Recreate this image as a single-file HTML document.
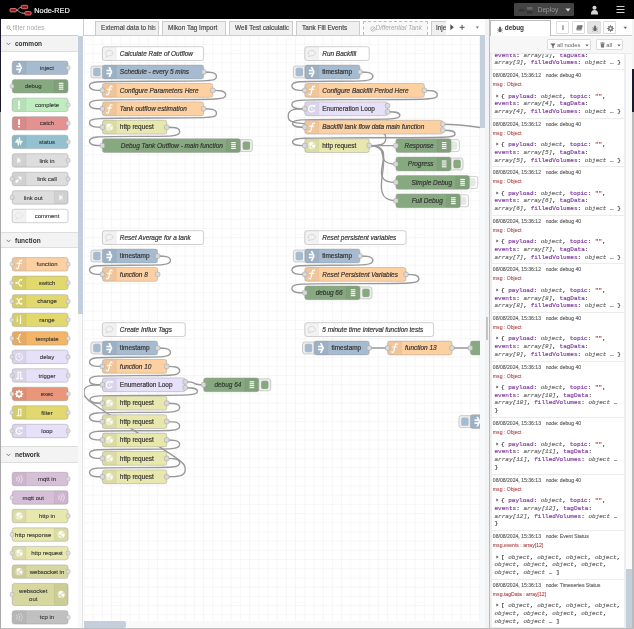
<!DOCTYPE html>
<html><head><meta charset="utf-8"><title>Node-RED</title>
<style>
html,body{margin:0;padding:0;background:#fff;}
body{width:634px;height:629px;overflow:hidden;position:relative;font-family:"Liberation Sans", sans-serif;color:#333;}
#wrap{position:absolute;left:0;top:0;width:634px;height:629px;overflow:hidden;will-change:transform;}
div,span{box-sizing:border-box;}
.abs{position:absolute;}
#hdr{position:absolute;left:0;top:0;width:634px;height:18.7px;background:#000;}
#hdr .title{position:absolute;left:34.3px;top:6.2px;font-size:7.35px;line-height:9px;color:#eee;white-space:nowrap;-webkit-text-stroke:0.2px #eee;}
#deploy{position:absolute;left:514.2px;top:3.3px;width:59.5px;height:12.5px;background:#444;border-radius:1px;}
#deploy .lbl{position:absolute;left:23.5px;top:2.6px;font-size:6.6px;line-height:8px;color:#999;}
#deploy .div{position:absolute;left:46.5px;top:0;width:0.6px;height:12.5px;background:#222;}
#palette{position:absolute;left:1.4px;top:18.7px;width:77px;height:611px;background:#fff;overflow:hidden;}
#psearch{position:absolute;left:0;top:0;width:82px;height:17.3px;background:#fff;border-bottom:0.6px solid #ccc;}
#psearch .t{position:absolute;left:11.4px;top:5.5px;font-size:6.5px;line-height:8px;color:#aaa;}
.cat{position:absolute;left:0;width:77px;height:16.8px;background:#f3f3f3;border-top:0.5px solid #ddd;border-bottom:0.5px solid #ddd;}
.cat .t{position:absolute;left:13.6px;top:4.3px;font-size:6.5px;line-height:8px;font-weight:bold;color:#333;}
#pscroll{position:absolute;left:78.3px;top:36px;width:5.2px;height:594px;background:#f8f9fa;border-right:0.5px solid #e4e4e4;}
#pscroll .th{position:absolute;left:0;top:0;width:5.2px;height:278.3px;background:#c3cfdc;}
#tabs{position:absolute;left:83.5px;top:18.7px;width:402px;height:17.3px;background:#fff;border-bottom:1px solid #ccc;}
.tab{position:absolute;top:2.2px;height:14.3px;background:#f0f0f0;border:0.6px solid #ccc;border-bottom:none;font-size:6.45px;line-height:8px;color:#444;-webkit-text-stroke:0.15px #444;white-space:nowrap;overflow:hidden;padding:2.5px 0 0 5px;}
.tab .fd{position:absolute;right:0;top:0;width:5px;height:14px;background:linear-gradient(to right,rgba(240,240,240,0),#f0f0f0);}
.tab.dis{border-style:dashed dashed none dashed;border-color:#bbb;color:#aaa;-webkit-text-stroke:0;font-style:italic;background:#f8f8f8;}
#canvas{position:absolute;left:83.5px;top:36.0px;width:396px;height:586px;background:#fff;overflow:hidden;}
#vscroll{position:absolute;left:479.6px;top:36px;width:5.2px;height:586px;background:#f8f9fa;}
#vscroll .th{position:absolute;left:0;top:0;width:5.2px;height:92.3px;background:#c3cfdc;}
#hscroll{position:absolute;left:83.5px;top:621.3px;width:401.5px;height:8px;background:#f8f9fa;}
#hscroll .th{position:absolute;left:0;top:0;width:42px;height:6.4px;background:#c3cfdc;border-radius:0 2px 2px 0;}
#sep{position:absolute;left:484.8px;top:18.7px;width:4px;height:611px;background:#f3f3f3;}
#side{position:absolute;left:488.5px;top:18.7px;width:143.6px;height:611px;background:#fff;border-left:0.6px solid #bbb;overflow:hidden;}
#stabs{position:absolute;left:0;top:0;width:144px;height:17.3px;background:#fff;border-bottom:1px solid #ccc;}
#stab{position:absolute;left:0.7px;top:1.8px;width:60.5px;height:15.2px;background:#fff;border:0.6px solid #bbb;border-bottom:none;}
#stab .t{position:absolute;left:13.6px;top:2.3px;font-size:6.4px;line-height:8px;font-weight:bold;color:#333;}
.sbtn{position:absolute;top:2.3px;width:13.3px;height:12.7px;background:#fff;border:0.6px solid #ddd;border-radius:1px;}
#sfilter{position:absolute;left:0;top:17.3px;width:144px;height:18.3px;background:#f7f7f7;border-bottom:1px solid #eaeaea;}
.fbtn{position:absolute;top:3.4px;height:11px;background:#fff;border:0.6px solid #ddd;border-radius:1px;font-size:5.9px;line-height:7px;color:#666;white-space:nowrap;}
#msgs{position:absolute;left:0;top:35.6px;width:144px;height:578px;background:#fff;overflow:hidden;border-left:2.7px solid #eee;}
#msgs .rb{position:absolute;left:132.3px;top:0;width:2.7px;height:578px;background:#eee;}
#msgs .sb{position:absolute;left:134.9px;top:0;width:5.7px;height:578px;background:#fafafa;}
#msgs .sb .th{position:absolute;left:0;top:515.2px;width:6px;height:64px;background:#c3cfdc;}
.meta{position:absolute;left:1.35px;font-size:5.1px;line-height:7px;color:#666;white-space:nowrap;-webkit-text-stroke:0.15px;}
.meta .nn{position:absolute;left:52.8px;top:0;}
.topic{position:absolute;left:1.35px;font-size:5.1px;line-height:7px;color:#b04a4a;white-space:nowrap;-webkit-text-stroke:0.1px;}
.pl{position:absolute;left:3.0px;font-family:"Liberation Mono", monospace;font-size:6.03px;line-height:8px;color:#333;white-space:nowrap;-webkit-text-stroke:0.15px;}
.pl .k{color:#7d35a0;}
.pl .t{color:#666;font-style:italic;}
.pl .s{color:#b72828;}
.pl .car{position:absolute;left:1.300px;top:1.200px;}
.sep{position:absolute;left:0;width:133px;height:0.6px;background:#ececec;}
svg text{font-family:"Liberation Sans", sans-serif;stroke:#333;stroke-width:0.5px;stroke-opacity:0.75;}
</style></head><body><div id="wrap">
<!-- header -->
<div id="hdr">
<svg class="abs" style="left:9px;top:4px" width="24" height="12" viewBox="0 0 24 12">
<path d="M7 6.200C10 6.200 9.500 3 13 3M7 6.200C10 6.200 10 9.300 16 9.300" fill="none" stroke="#aaa" stroke-width="1"/>
<rect x="1" y="4.500" width="6.400" height="3.400" rx="1" fill="#a21616" stroke="#e39090" stroke-width="0.800"/>
<rect x="12.300" y="1.300" width="6.400" height="3.400" rx="1" fill="#a21616" stroke="#e39090" stroke-width="0.800"/>
<rect x="15.800" y="7.600" width="6.400" height="3.400" rx="1" fill="#a21616" stroke="#e39090" stroke-width="0.800"/>
</svg>
<div class="title">Node-RED</div>
<div id="deploy">
<svg class="abs" style="left:4px;top:2.500px" width="16" height="8" viewBox="0 0 16 8"><rect x="1" y="3" width="5" height="2.600" fill="#333"/><rect x="9" y="1" width="5.500" height="2.600" fill="#666"/><rect x="9" y="5" width="5.500" height="2.600" fill="#333"/><path d="M6 4.300h3" stroke="#333" stroke-width="0.800"/></svg>
<div class="lbl">Deploy</div>
<svg class="abs" style="left:51px;top:4.800px" width="6" height="4" viewBox="0 0 6 4"><path d="M0.500 0.500h5l-2.500 3z" fill="#ddd"/></svg>
</div>
<svg class="abs" style="left:589.500px;top:4.500px" width="9" height="10" viewBox="0 0 10 11"><circle cx="5" cy="3" r="2.300" fill="#d4d4d4"/><path d="M1 10.500c0-3.500 1.500-5 4-5s4 1.500 4 5z" fill="#d4d4d4"/></svg>
<svg class="abs" style="left:615.500px;top:5px" width="9" height="9" viewBox="0 0 9 9"><path d="M0.500 1.500h8M0.500 4.500h8M0.500 7.500h8" stroke="#d0d0d0" stroke-width="1.200"/></svg>
</div>
<div class="abs" style="left:0;top:18.700px;width:1.200px;height:93.700px;background:#1a1a2c"></div>
<div class="abs" style="left:0;top:112.400px;width:1.200px;height:518px;background:#aaa"></div>
<div class="abs" style="left:632.200px;top:18.700px;width:1.800px;height:50px;background:#f4f4f4"></div><div class="abs" style="left:632.200px;top:68.500px;width:1.800px;height:43.900px;background:#1a1a2c"></div>
<div class="abs" style="left:632.200px;top:112.400px;width:1.800px;height:518px;background:#bbb"></div>

<!-- palette -->
<div id="palette">
<div id="psearch"><svg class="abs" style="left:4.700px;top:6.300px" width="6" height="6" viewBox="0 0 6 6"><circle cx="2.400" cy="2.400" r="1.500" fill="none" stroke="#999" stroke-width="0.800"/><path d="M3.600 3.600l1.900 1.900" stroke="#999" stroke-width="0.900"/></svg><div class="t">filter nodes</div></div>
<div class="cat" style="top:17.300px;border-top:none;height:16.300px"><svg class="abs" style="left:4.800px;top:6px" width="5" height="4" viewBox="0 0 5 4"><path d="M0.600 0.800l1.900 2 1.900-2" fill="none" stroke="#666" stroke-width="0.800"/></svg><div class="t">common</div></div>
<div class="cat" style="top:213px"><svg class="abs" style="left:4.800px;top:6px" width="5" height="4" viewBox="0 0 5 4"><path d="M0.600 0.800l1.900 2 1.900-2" fill="none" stroke="#666" stroke-width="0.800"/></svg><div class="t">function</div></div>
<div class="cat" style="top:427.500px"><svg class="abs" style="left:4.800px;top:6px" width="5" height="4" viewBox="0 0 5 4"><path d="M0.600 0.800l1.900 2 1.900-2" fill="none" stroke="#666" stroke-width="0.800"/></svg><div class="t">network</div></div>
</div>
<svg class="abs" style="left:0;top:0" width="84" height="629" viewBox="0 0 84 629">
<defs><clipPath id="pc"><rect x="1.400" y="36" width="77" height="593"/></clipPath></defs>
<g clip-path="url(#pc)">
<g transform="translate(12.2,61.1) scale(0.46)"><rect rx="5" ry="5" width="121.4" height="29.2" fill="#a6bbcf" stroke="#999"/><g transform="translate(0,0)"><path d="M30 0.500h-25a4.500 4.500 0 0 0-4.500 4.500v19.2a4.500 4.500 0 0 0 4.500 4.500h25z" fill="#000" fill-opacity="0.05"/><path d="M30 1v27.2" stroke="#000" stroke-opacity="0.1"/><g transform="translate(0,-0.4)"><path d="M12.800 4.300h3.800l5.200 10.700-5.200 10.700h-3.800l5.200-10.700z" fill="#fff"/><rect x="8.800" y="10" width="9" height="3.500" fill="#fff"/><rect x="8.800" y="16.500" width="9" height="3.500" fill="#fff"/></g></g><text x="75.7" y="19.2" text-anchor="middle" font-size="13" fill="#333" style="stroke-width:0.3px">inject</text><rect x="117.4" y="10.1" rx="3" ry="3" width="8.500" height="9" fill="#dcdcdc" stroke="#999" stroke-opacity=".8"/></g>
<g transform="translate(12.2,79.62) scale(0.46)"><rect rx="5" ry="5" width="121.4" height="29.2" fill="#87a980" stroke="#999"/><g transform="translate(91.4,0)"><path d="M0 0.500h25a4.500 4.500 0 0 1 4.500 4.500v19.2a4.500 4.500 0 0 1-4.500 4.500h-25z" fill="#000" fill-opacity="0.05"/><path d="M0 1v27.2" stroke="#000" stroke-opacity="0.1"/><g transform="translate(0,-0.4)"><rect x="10" y="7.2" width="10" height="2.6" fill="#fff" opacity="0.9"/><rect x="10" y="11.4" width="10" height="2.6" fill="#fff" opacity="0.9"/><rect x="10" y="15.6" width="10" height="2.6" fill="#fff" opacity="0.9"/><rect x="10" y="19.8" width="10" height="2.6" fill="#fff" opacity="0.9"/></g></g><text x="45.7" y="19.2" text-anchor="middle" font-size="13" fill="#333" style="stroke-width:0.3px">debug</text><rect x="-4.5" y="10.1" rx="3" ry="3" width="8.500" height="9" fill="#dcdcdc" stroke="#999" stroke-opacity=".8"/></g>
<g transform="translate(12.2,98.14) scale(0.46)"><rect rx="5" ry="5" width="121.4" height="29.2" fill="#c0edc0" stroke="#999"/><g transform="translate(0,0)"><path d="M30 0.500h-25a4.500 4.500 0 0 0-4.500 4.500v19.2a4.500 4.500 0 0 0 4.500 4.500h25z" fill="#000" fill-opacity="0.05"/><path d="M30 1v27.2" stroke="#000" stroke-opacity="0.1"/><g transform="translate(0,-0.4)"><rect x="13" y="6" width="4" height="12.500" fill="#fff"/><rect x="13" y="20.500" width="4" height="3.500" fill="#fff"/></g></g><text x="75.7" y="19.2" text-anchor="middle" font-size="13" fill="#333" style="stroke-width:0.3px">complete</text><rect x="117.4" y="10.1" rx="3" ry="3" width="8.500" height="9" fill="#dcdcdc" stroke="#999" stroke-opacity=".8"/></g>
<g transform="translate(12.2,116.66) scale(0.46)"><rect rx="5" ry="5" width="121.4" height="29.2" fill="#e49191" stroke="#999"/><g transform="translate(0,0)"><path d="M30 0.500h-25a4.500 4.500 0 0 0-4.500 4.500v19.2a4.500 4.500 0 0 0 4.500 4.500h25z" fill="#000" fill-opacity="0.05"/><path d="M30 1v27.2" stroke="#000" stroke-opacity="0.1"/><g transform="translate(0,-0.4)"><rect x="13" y="6" width="4" height="12.500" fill="#fff"/><rect x="13" y="20.500" width="4" height="3.500" fill="#fff"/></g></g><text x="75.7" y="19.2" text-anchor="middle" font-size="13" fill="#333" style="stroke-width:0.3px">catch</text><rect x="117.4" y="10.1" rx="3" ry="3" width="8.500" height="9" fill="#dcdcdc" stroke="#999" stroke-opacity=".8"/></g>
<g transform="translate(12.2,135.18) scale(0.46)"><rect rx="5" ry="5" width="121.4" height="29.2" fill="#94c1d0" stroke="#999"/><g transform="translate(0,0)"><path d="M30 0.500h-25a4.500 4.500 0 0 0-4.500 4.500v19.2a4.500 4.500 0 0 0 4.500 4.500h25z" fill="#000" fill-opacity="0.05"/><path d="M30 1v27.2" stroke="#000" stroke-opacity="0.1"/><g transform="translate(0,-0.4)"><path d="M6.500 15.500h2.500l2-6 2.300 13 2.400-17 2.400 15 2-7h3" fill="none" stroke="#fff" stroke-width="2.300" stroke-linejoin="round"/></g></g><text x="75.7" y="19.2" text-anchor="middle" font-size="13" fill="#333" style="stroke-width:0.3px">status</text><rect x="117.4" y="10.1" rx="3" ry="3" width="8.500" height="9" fill="#dcdcdc" stroke="#999" stroke-opacity=".8"/></g>
<g transform="translate(12.2,153.7) scale(0.46)"><rect rx="5" ry="5" width="121.4" height="29.2" fill="#ddd" stroke="#999"/><g transform="translate(0,0)"><path d="M30 0.500h-25a4.500 4.500 0 0 0-4.500 4.500v19.2a4.500 4.500 0 0 0 4.500 4.500h25z" fill="#000" fill-opacity="0.05"/><path d="M30 1v27.2" stroke="#000" stroke-opacity="0.1"/><g transform="translate(0,-0.4)"><path d="M11 8.500l7.500 6.500-7.500 6.500z" fill="#fff" opacity=".85"/><path d="M17 8v14" stroke="#fff" stroke-width="1.600" opacity=".7"/></g></g><text x="75.7" y="19.2" text-anchor="middle" font-size="13" fill="#333" style="stroke-width:0.3px">link in</text><rect x="117.4" y="10.1" rx="3" ry="3" width="8.500" height="9" fill="#dcdcdc" stroke="#999" stroke-opacity=".8"/></g>
<g transform="translate(12.2,172.22) scale(0.46)"><rect rx="5" ry="5" width="121.4" height="29.2" fill="#ddd" stroke="#999"/><g transform="translate(0,0)"><path d="M30 0.500h-25a4.500 4.500 0 0 0-4.500 4.500v19.2a4.500 4.500 0 0 0 4.500 4.500h25z" fill="#000" fill-opacity="0.05"/><path d="M30 1v27.2" stroke="#000" stroke-opacity="0.1"/><g transform="translate(0,-0.4)"><path d="M9 21l5-5" stroke="#fff" stroke-width="3" opacity=".9"/><path d="M12 9.500l8.500 1-1 8.500z" fill="#fff" opacity=".9"/><circle cx="10" cy="20.500" r="3" fill="#fff" opacity=".9"/></g></g><text x="75.7" y="19.2" text-anchor="middle" font-size="13" fill="#333" style="stroke-width:0.3px">link call</text><rect x="-4.5" y="10.1" rx="3" ry="3" width="8.500" height="9" fill="#dcdcdc" stroke="#999" stroke-opacity=".8"/><rect x="117.4" y="10.1" rx="3" ry="3" width="8.500" height="9" fill="#dcdcdc" stroke="#999" stroke-opacity=".8"/></g>
<g transform="translate(12.2,190.74) scale(0.46)"><rect rx="5" ry="5" width="121.4" height="29.2" fill="#ddd" stroke="#999"/><g transform="translate(91.4,0)"><path d="M0 0.500h25a4.500 4.500 0 0 1 4.500 4.500v19.2a4.500 4.500 0 0 1-4.500 4.500h-25z" fill="#000" fill-opacity="0.05"/><path d="M0 1v27.2" stroke="#000" stroke-opacity="0.1"/><g transform="translate(0,-0.4)"><path d="M11 8.500l7.500 6.500-7.500 6.500z" fill="#fff" opacity=".85"/><path d="M17 8v14" stroke="#fff" stroke-width="1.600" opacity=".7"/></g></g><text x="45.7" y="19.2" text-anchor="middle" font-size="13" fill="#333" style="stroke-width:0.3px">link out</text><rect x="-4.5" y="10.1" rx="3" ry="3" width="8.500" height="9" fill="#dcdcdc" stroke="#999" stroke-opacity=".8"/></g>
<g transform="translate(12.2,209.26) scale(0.46)"><rect rx="5" ry="5" width="121.4" height="29.2" fill="#ffffff" stroke="#999"/><g transform="translate(0,0)"><path d="M30 0.500h-25a4.500 4.500 0 0 0-4.500 4.500v19.2a4.500 4.500 0 0 0 4.500 4.500h25z" fill="#000" fill-opacity="0.05"/><path d="M30 1v27.2" stroke="#000" stroke-opacity="0.1"/><g transform="translate(0,-0.4)"><path d="M15 8c-4.4 0-8 2.7-8 6 0 1.9 1.1 3.500 2.900 4.600-.2 1.300-.9 2.500-1.900 3.400 2-.2 3.700-1 5-2.200.6.1 1.300.2 2 .2 4.400 0 8-2.700 8-6s-3.600-6-8-6z" fill="none" stroke="#ddd" stroke-width="1.6"/></g></g><text x="75.7" y="19.2" text-anchor="middle" font-size="13" fill="#333" style="stroke-width:0.3px">comment</text></g>
<g transform="translate(12.2,257.6) scale(0.46)"><rect rx="5" ry="5" width="121.4" height="29.2" fill="#fdd0a2" stroke="#999"/><g transform="translate(0,0)"><path d="M30 0.500h-25a4.500 4.500 0 0 0-4.500 4.500v19.2a4.500 4.500 0 0 0 4.500 4.500h25z" fill="#000" fill-opacity="0.05"/><path d="M30 1v27.2" stroke="#000" stroke-opacity="0.1"/><g transform="translate(0,-0.4)"><path d="M21 7.300c-.7-2.100-3.900-2.100-4.500 1.100l-2.900 13.600c-.6 3.100-3.300 3.300-4.500 1.500M10.800 12.800h8.400" fill="none" stroke="#fff" stroke-width="2.600" stroke-linecap="round"/></g></g><text x="75.7" y="19.2" text-anchor="middle" font-size="13" fill="#333" style="stroke-width:0.3px">function</text><rect x="-4.5" y="10.1" rx="3" ry="3" width="8.500" height="9" fill="#dcdcdc" stroke="#999" stroke-opacity=".8"/><rect x="117.4" y="10.1" rx="3" ry="3" width="8.500" height="9" fill="#dcdcdc" stroke="#999" stroke-opacity=".8"/></g>
<g transform="translate(12.2,276.12) scale(0.46)"><rect rx="5" ry="5" width="121.4" height="29.2" fill="#e2d96e" stroke="#999"/><g transform="translate(0,0)"><path d="M30 0.500h-25a4.500 4.500 0 0 0-4.500 4.500v19.2a4.500 4.500 0 0 0 4.500 4.500h25z" fill="#000" fill-opacity="0.05"/><path d="M30 1v27.2" stroke="#000" stroke-opacity="0.1"/><g transform="translate(0,-0.4)"><path d="M8.500 15h5M19.500 8.500h-2.500l-4 6.500 4 6.500h2.500" fill="none" stroke="#fff" stroke-width="2.300" stroke-linejoin="round"/><circle cx="9" cy="15" r="2.300" fill="#fff"/><circle cx="20" cy="8.500" r="1.800" fill="#fff"/><circle cx="20" cy="21.500" r="1.800" fill="#fff"/></g></g><text x="75.7" y="19.2" text-anchor="middle" font-size="13" fill="#333" style="stroke-width:0.3px">switch</text><rect x="-4.5" y="10.1" rx="3" ry="3" width="8.500" height="9" fill="#dcdcdc" stroke="#999" stroke-opacity=".8"/><rect x="117.4" y="10.1" rx="3" ry="3" width="8.500" height="9" fill="#dcdcdc" stroke="#999" stroke-opacity=".8"/></g>
<g transform="translate(12.2,294.64) scale(0.46)"><rect rx="5" ry="5" width="121.4" height="29.2" fill="#e2d96e" stroke="#999"/><g transform="translate(0,0)"><path d="M30 0.500h-25a4.500 4.500 0 0 0-4.500 4.500v19.2a4.500 4.500 0 0 0 4.500 4.500h25z" fill="#000" fill-opacity="0.05"/><path d="M30 1v27.2" stroke="#000" stroke-opacity="0.1"/><g transform="translate(0,-0.4)"><path d="M9 9.500h2.500l6 11h2.500M9 20.500h2.500l6-11h2.500" fill="none" stroke="#fff" stroke-width="2.300"/><path d="M19 6.500l3.500 3-3.500 3zM19 17.500l3.500 3-3.500 3z" fill="#fff"/></g></g><text x="75.7" y="19.2" text-anchor="middle" font-size="13" fill="#333" style="stroke-width:0.3px">change</text><rect x="-4.5" y="10.1" rx="3" ry="3" width="8.500" height="9" fill="#dcdcdc" stroke="#999" stroke-opacity=".8"/><rect x="117.4" y="10.1" rx="3" ry="3" width="8.500" height="9" fill="#dcdcdc" stroke="#999" stroke-opacity=".8"/></g>
<g transform="translate(12.2,313.16) scale(0.46)"><rect rx="5" ry="5" width="121.4" height="29.2" fill="#e2d96e" stroke="#999"/><g transform="translate(0,0)"><path d="M30 0.500h-25a4.500 4.500 0 0 0-4.500 4.500v19.2a4.500 4.500 0 0 0 4.500 4.500h25z" fill="#000" fill-opacity="0.05"/><path d="M30 1v27.2" stroke="#000" stroke-opacity="0.1"/><g transform="translate(0,-0.4)"><path d="M11 12v8" stroke="#fff" stroke-width="2.200"/><circle cx="11" cy="9" r="1.300" fill="#fff"/><path d="M18 10v14" stroke="#fff" stroke-width="2.600"/><circle cx="18" cy="6.500" r="1.600" fill="#fff"/></g></g><text x="75.7" y="19.2" text-anchor="middle" font-size="13" fill="#333" style="stroke-width:0.3px">range</text><rect x="-4.5" y="10.1" rx="3" ry="3" width="8.500" height="9" fill="#dcdcdc" stroke="#999" stroke-opacity=".8"/><rect x="117.4" y="10.1" rx="3" ry="3" width="8.500" height="9" fill="#dcdcdc" stroke="#999" stroke-opacity=".8"/></g>
<g transform="translate(12.2,331.68) scale(0.46)"><rect rx="5" ry="5" width="121.4" height="29.2" fill="#f3b567" stroke="#999"/><g transform="translate(0,0)"><path d="M30 0.500h-25a4.500 4.500 0 0 0-4.500 4.500v19.2a4.500 4.500 0 0 0 4.500 4.500h25z" fill="#000" fill-opacity="0.05"/><path d="M30 1v27.2" stroke="#000" stroke-opacity="0.1"/><g transform="translate(0,-0.4)"><path d="M19 6c-3.500 0-4 1.500-4 4.500 0 2.500-.5 3.700-3 4.500 2.500.8 3 2 3 4.500 0 3 .5 4.500 4 4.500" fill="none" stroke="#fff" stroke-width="2.200"/></g></g><text x="75.7" y="19.2" text-anchor="middle" font-size="13" fill="#333" style="stroke-width:0.3px">template</text><rect x="-4.5" y="10.1" rx="3" ry="3" width="8.500" height="9" fill="#dcdcdc" stroke="#999" stroke-opacity=".8"/><rect x="117.4" y="10.1" rx="3" ry="3" width="8.500" height="9" fill="#dcdcdc" stroke="#999" stroke-opacity=".8"/></g>
<g transform="translate(12.2,350.2) scale(0.46)"><rect rx="5" ry="5" width="121.4" height="29.2" fill="#e6e0f8" stroke="#999"/><g transform="translate(0,0)"><path d="M30 0.500h-25a4.500 4.500 0 0 0-4.500 4.500v19.2a4.500 4.500 0 0 0 4.500 4.500h25z" fill="#000" fill-opacity="0.05"/><path d="M30 1v27.2" stroke="#000" stroke-opacity="0.1"/><g transform="translate(0,-0.4)"><circle cx="15" cy="15" r="7.500" fill="none" stroke="#fff" stroke-width="1.800" opacity=".9"/><path d="M15 10v5l3.500 2.500" fill="none" stroke="#fff" stroke-width="1.800" opacity=".9"/></g></g><text x="75.7" y="19.2" text-anchor="middle" font-size="13" fill="#333" style="stroke-width:0.3px">delay</text><rect x="-4.5" y="10.1" rx="3" ry="3" width="8.500" height="9" fill="#dcdcdc" stroke="#999" stroke-opacity=".8"/><rect x="117.4" y="10.1" rx="3" ry="3" width="8.500" height="9" fill="#dcdcdc" stroke="#999" stroke-opacity=".8"/></g>
<g transform="translate(12.2,368.72) scale(0.46)"><rect rx="5" ry="5" width="121.4" height="29.2" fill="#e6e0f8" stroke="#999"/><g transform="translate(0,0)"><path d="M30 0.500h-25a4.500 4.500 0 0 0-4.500 4.500v19.2a4.500 4.500 0 0 0 4.500 4.500h25z" fill="#000" fill-opacity="0.05"/><path d="M30 1v27.2" stroke="#000" stroke-opacity="0.1"/><g transform="translate(0,-0.4)"><path d="M8.500 22h4.500v-14h5.500v14h4.500" fill="none" stroke="#fff" stroke-width="2.400"/></g></g><text x="75.7" y="19.2" text-anchor="middle" font-size="13" fill="#333" style="stroke-width:0.3px">trigger</text><rect x="-4.5" y="10.1" rx="3" ry="3" width="8.500" height="9" fill="#dcdcdc" stroke="#999" stroke-opacity=".8"/><rect x="117.4" y="10.1" rx="3" ry="3" width="8.500" height="9" fill="#dcdcdc" stroke="#999" stroke-opacity=".8"/></g>
<g transform="translate(12.2,387.24) scale(0.46)"><rect rx="5" ry="5" width="121.4" height="29.2" fill="#e9967a" stroke="#999"/><g transform="translate(0,0)"><path d="M30 0.500h-25a4.500 4.500 0 0 0-4.500 4.500v19.2a4.500 4.500 0 0 0 4.500 4.500h25z" fill="#000" fill-opacity="0.05"/><path d="M30 1v27.2" stroke="#000" stroke-opacity="0.1"/><g transform="translate(0,-0.4)"><circle cx="15" cy="15" r="5.200" fill="none" stroke="#fff" stroke-width="3.400"/><rect x="13.500" y="6" width="3" height="3.500" fill="#fff" transform="rotate(0 15 15)"/><rect x="13.500" y="6" width="3" height="3.500" fill="#fff" transform="rotate(45 15 15)"/><rect x="13.500" y="6" width="3" height="3.500" fill="#fff" transform="rotate(90 15 15)"/><rect x="13.500" y="6" width="3" height="3.500" fill="#fff" transform="rotate(135 15 15)"/><rect x="13.500" y="6" width="3" height="3.500" fill="#fff" transform="rotate(180 15 15)"/><rect x="13.500" y="6" width="3" height="3.500" fill="#fff" transform="rotate(225 15 15)"/><rect x="13.500" y="6" width="3" height="3.500" fill="#fff" transform="rotate(270 15 15)"/><rect x="13.500" y="6" width="3" height="3.500" fill="#fff" transform="rotate(315 15 15)"/></g></g><text x="75.7" y="19.2" text-anchor="middle" font-size="13" fill="#333" style="stroke-width:0.3px">exec</text><rect x="-4.5" y="10.1" rx="3" ry="3" width="8.500" height="9" fill="#dcdcdc" stroke="#999" stroke-opacity=".8"/><rect x="117.4" y="10.1" rx="3" ry="3" width="8.500" height="9" fill="#dcdcdc" stroke="#999" stroke-opacity=".8"/></g>
<g transform="translate(12.2,405.76) scale(0.46)"><rect rx="5" ry="5" width="121.4" height="29.2" fill="#e2d96e" stroke="#999"/><g transform="translate(0,0)"><path d="M30 0.500h-25a4.500 4.500 0 0 0-4.500 4.500v19.2a4.500 4.500 0 0 0 4.500 4.500h25z" fill="#000" fill-opacity="0.05"/><path d="M30 1v27.2" stroke="#000" stroke-opacity="0.1"/><g transform="translate(0,-0.4)"><path d="M9.500 22h4v-14h5.500v14h-4" fill="none" stroke="#fff" stroke-width="2.200"/></g></g><text x="75.7" y="19.2" text-anchor="middle" font-size="13" fill="#333" style="stroke-width:0.3px">filter</text><rect x="-4.5" y="10.1" rx="3" ry="3" width="8.500" height="9" fill="#dcdcdc" stroke="#999" stroke-opacity=".8"/><rect x="117.4" y="10.1" rx="3" ry="3" width="8.500" height="9" fill="#dcdcdc" stroke="#999" stroke-opacity=".8"/></g>
<g transform="translate(12.2,424.28) scale(0.46)"><rect rx="5" ry="5" width="121.4" height="29.2" fill="#e6e0f8" stroke="#999"/><g transform="translate(0,0)"><path d="M30 0.500h-25a4.500 4.500 0 0 0-4.500 4.500v19.2a4.500 4.500 0 0 0 4.500 4.500h25z" fill="#000" fill-opacity="0.05"/><path d="M30 1v27.2" stroke="#000" stroke-opacity="0.1"/><g transform="translate(0,-0.4)"><path d="M21.300 17.800a6.800 6.800 0 1 1-1-7.200" fill="none" stroke="#fff" stroke-width="2.600" opacity="0.95"/><path d="M17.500 6l6 1.200-2.600 5.500z" fill="#fff"/><path d="M15 11.500v4l2.500 1.500" stroke="#fff" stroke-width="1.500" fill="none" opacity="0.9"/></g></g><text x="75.7" y="19.2" text-anchor="middle" font-size="13" fill="#333" style="stroke-width:0.3px">loop</text><rect x="-4.5" y="10.1" rx="3" ry="3" width="8.500" height="9" fill="#dcdcdc" stroke="#999" stroke-opacity=".8"/><rect x="117.4" y="10.1" rx="3" ry="3" width="8.500" height="9" fill="#dcdcdc" stroke="#999" stroke-opacity=".8"/></g>
<g transform="translate(12.2,472.3) scale(0.46)"><rect rx="5" ry="5" width="121.4" height="29.2" fill="#d8bfd8" stroke="#999"/><g transform="translate(0,0)"><path d="M30 0.500h-25a4.500 4.500 0 0 0-4.500 4.500v19.2a4.500 4.500 0 0 0 4.500 4.500h25z" fill="#000" fill-opacity="0.05"/><path d="M30 1v27.2" stroke="#000" stroke-opacity="0.1"/><g transform="translate(0,-0.4)"><path d="M13 8c4 4 4 10 0 14M17.500 6c5.500 5.500 5.500 12.500 0 18M9 10.500c2.200 2.500 2.200 6.500 0 9" fill="none" stroke="#fff" stroke-width="1.600" opacity=".85"/></g></g><text x="75.7" y="19.2" text-anchor="middle" font-size="13" fill="#333" style="stroke-width:0.3px">mqtt in</text><rect x="117.4" y="10.1" rx="3" ry="3" width="8.500" height="9" fill="#dcdcdc" stroke="#999" stroke-opacity=".8"/></g>
<g transform="translate(12.2,490.82) scale(0.46)"><rect rx="5" ry="5" width="121.4" height="29.2" fill="#d8bfd8" stroke="#999"/><g transform="translate(91.4,0)"><path d="M0 0.500h25a4.500 4.500 0 0 1 4.500 4.500v19.2a4.500 4.500 0 0 1-4.500 4.500h-25z" fill="#000" fill-opacity="0.05"/><path d="M0 1v27.2" stroke="#000" stroke-opacity="0.1"/><g transform="translate(0,-0.4)"><path d="M13 8c4 4 4 10 0 14M17.500 6c5.500 5.500 5.500 12.500 0 18M9 10.500c2.200 2.500 2.200 6.500 0 9" fill="none" stroke="#fff" stroke-width="1.600" opacity=".85"/></g></g><text x="45.7" y="19.2" text-anchor="middle" font-size="13" fill="#333" style="stroke-width:0.3px">mqtt out</text><rect x="-4.5" y="10.1" rx="3" ry="3" width="8.500" height="9" fill="#dcdcdc" stroke="#999" stroke-opacity=".8"/></g>
<g transform="translate(12.2,509.34) scale(0.46)"><rect rx="5" ry="5" width="121.4" height="29.2" fill="#e7e7ae" stroke="#999"/><g transform="translate(0,0)"><path d="M30 0.500h-25a4.500 4.500 0 0 0-4.500 4.500v19.2a4.500 4.500 0 0 0 4.500 4.500h25z" fill="#000" fill-opacity="0.05"/><path d="M30 1v27.2" stroke="#000" stroke-opacity="0.1"/><g transform="translate(0,-0.4)"><circle cx="15" cy="15" r="7.600" fill="#fff" fill-opacity="0.25" stroke="#fff" stroke-width="1" stroke-opacity="0.7"/><path d="M9.500 10.500c2-2.500 5-3.500 7.500-2.800l1.500 2.300-2 1.200-.5 2.300-2.500.5-1 2.500-2.500-1.500z" fill="#fff"/><path d="M16 14.500l3.500-1.500 2.800 1.500c.3 2.500-.8 5-3 6.500l-1.300-2.500-2.500-.8z" fill="#fff"/><path d="M11 17.500l2.500 1 .5 3.500c-1.500-.5-3-2-3.500-3.500z" fill="#fff"/></g></g><text x="75.7" y="19.2" text-anchor="middle" font-size="13" fill="#333" style="stroke-width:0.3px">http in</text><rect x="117.4" y="10.1" rx="3" ry="3" width="8.500" height="9" fill="#dcdcdc" stroke="#999" stroke-opacity=".8"/></g>
<g transform="translate(12.2,527.86) scale(0.46)"><rect rx="5" ry="5" width="121.4" height="29.2" fill="#e7e7ae" stroke="#999"/><g transform="translate(91.4,0)"><path d="M0 0.500h25a4.500 4.500 0 0 1 4.500 4.500v19.2a4.500 4.500 0 0 1-4.500 4.500h-25z" fill="#000" fill-opacity="0.05"/><path d="M0 1v27.2" stroke="#000" stroke-opacity="0.1"/><g transform="translate(0,-0.4)"><circle cx="15" cy="15" r="7.600" fill="#fff" fill-opacity="0.25" stroke="#fff" stroke-width="1" stroke-opacity="0.7"/><path d="M9.500 10.500c2-2.500 5-3.500 7.500-2.800l1.500 2.300-2 1.200-.5 2.300-2.500.5-1 2.500-2.500-1.500z" fill="#fff"/><path d="M16 14.500l3.500-1.500 2.800 1.500c.3 2.500-.8 5-3 6.500l-1.300-2.500-2.500-.8z" fill="#fff"/><path d="M11 17.500l2.500 1 .5 3.500c-1.500-.5-3-2-3.500-3.500z" fill="#fff"/></g></g><text x="45.7" y="19.2" text-anchor="middle" font-size="13" fill="#333" style="stroke-width:0.3px">http response</text><rect x="-4.5" y="10.1" rx="3" ry="3" width="8.500" height="9" fill="#dcdcdc" stroke="#999" stroke-opacity=".8"/></g>
<g transform="translate(12.2,546.38) scale(0.46)"><rect rx="5" ry="5" width="121.4" height="29.2" fill="#e7e7ae" stroke="#999"/><g transform="translate(0,0)"><path d="M30 0.500h-25a4.500 4.500 0 0 0-4.500 4.500v19.2a4.500 4.500 0 0 0 4.500 4.500h25z" fill="#000" fill-opacity="0.05"/><path d="M30 1v27.2" stroke="#000" stroke-opacity="0.1"/><g transform="translate(0,-0.4)"><circle cx="15" cy="15" r="7.600" fill="#fff" fill-opacity="0.25" stroke="#fff" stroke-width="1" stroke-opacity="0.7"/><path d="M9.500 10.500c2-2.500 5-3.500 7.500-2.800l1.500 2.300-2 1.200-.5 2.300-2.500.5-1 2.500-2.500-1.500z" fill="#fff"/><path d="M16 14.500l3.500-1.500 2.800 1.500c.3 2.500-.8 5-3 6.500l-1.300-2.500-2.500-.8z" fill="#fff"/><path d="M11 17.500l2.500 1 .5 3.500c-1.500-.5-3-2-3.500-3.500z" fill="#fff"/></g></g><text x="75.7" y="19.2" text-anchor="middle" font-size="13" fill="#333" style="stroke-width:0.3px">http request</text><rect x="-4.5" y="10.1" rx="3" ry="3" width="8.500" height="9" fill="#dcdcdc" stroke="#999" stroke-opacity=".8"/><rect x="117.4" y="10.1" rx="3" ry="3" width="8.500" height="9" fill="#dcdcdc" stroke="#999" stroke-opacity=".8"/></g>
<g transform="translate(12.2,564.9) scale(0.46)"><rect rx="5" ry="5" width="121.4" height="29.2" fill="#d7d7a0" stroke="#999"/><g transform="translate(0,0)"><path d="M30 0.500h-25a4.500 4.500 0 0 0-4.500 4.500v19.2a4.500 4.500 0 0 0 4.500 4.500h25z" fill="#000" fill-opacity="0.05"/><path d="M30 1v27.2" stroke="#000" stroke-opacity="0.1"/><g transform="translate(0,-0.4)"><circle cx="15" cy="15" r="7.600" fill="#fff" fill-opacity="0.25" stroke="#fff" stroke-width="1" stroke-opacity="0.7"/><path d="M9.500 10.500c2-2.500 5-3.500 7.500-2.800l1.500 2.300-2 1.200-.5 2.300-2.500.5-1 2.500-2.500-1.500z" fill="#fff"/><path d="M16 14.500l3.500-1.500 2.800 1.500c.3 2.500-.8 5-3 6.500l-1.300-2.500-2.500-.8z" fill="#fff"/><path d="M11 17.500l2.500 1 .5 3.500c-1.500-.5-3-2-3.500-3.500z" fill="#fff"/></g></g><text x="75.7" y="19.2" text-anchor="middle" font-size="13" fill="#333" style="stroke-width:0.3px">websocket in</text><rect x="117.4" y="10.1" rx="3" ry="3" width="8.500" height="9" fill="#dcdcdc" stroke="#999" stroke-opacity=".8"/></g>
<g transform="translate(12.2,583.42) scale(0.46)"><rect rx="5" ry="5" width="121.4" height="48" fill="#d7d7a0" stroke="#999"/><g transform="translate(91.4,0)"><path d="M0 0.500h25a4.500 4.500 0 0 1 4.500 4.500v38a4.500 4.500 0 0 1-4.500 4.500h-25z" fill="#000" fill-opacity="0.05"/><path d="M0 1v46" stroke="#000" stroke-opacity="0.1"/><g transform="translate(0,9)"><circle cx="15" cy="15" r="7.600" fill="#fff" fill-opacity="0.25" stroke="#fff" stroke-width="1" stroke-opacity="0.7"/><path d="M9.500 10.500c2-2.500 5-3.500 7.500-2.800l1.500 2.300-2 1.200-.5 2.300-2.500.5-1 2.500-2.500-1.500z" fill="#fff"/><path d="M16 14.500l3.500-1.500 2.800 1.500c.3 2.500-.8 5-3 6.500l-1.300-2.500-2.500-.8z" fill="#fff"/><path d="M11 17.500l2.500 1 .5 3.500c-1.500-.5-3-2-3.500-3.500z" fill="#fff"/></g></g><text x="45.7" y="20.5" text-anchor="middle" font-size="13" fill="#333" style="stroke-width:0.3px">websocket</text><text x="45.7" y="38.5" text-anchor="middle" font-size="13" fill="#333" style="stroke-width:0.3px">out</text><rect x="-4.5" y="19.5" rx="3" ry="3" width="8.500" height="9" fill="#dcdcdc" stroke="#999" stroke-opacity=".8"/></g>
<g transform="translate(12.2,610.64) scale(0.46)"><rect rx="5" ry="5" width="121.4" height="29.2" fill="#c0c0c0" stroke="#999"/><g transform="translate(0,0)"><path d="M30 0.500h-25a4.500 4.500 0 0 0-4.500 4.500v19.2a4.500 4.500 0 0 0 4.500 4.500h25z" fill="#000" fill-opacity="0.05"/><path d="M30 1v27.2" stroke="#000" stroke-opacity="0.1"/><g transform="translate(0,-0.4)"><path d="M13 8c4 4 4 10 0 14M17.500 6c5.500 5.500 5.500 12.500 0 18M9 10.500c2.200 2.500 2.200 6.500 0 9" fill="none" stroke="#fff" stroke-width="1.600" stroke-dasharray="2.500 1.500" opacity=".85"/></g></g><text x="75.7" y="19.2" text-anchor="middle" font-size="13" fill="#333" style="stroke-width:0.3px">tcp in</text><rect x="117.4" y="10.1" rx="3" ry="3" width="8.500" height="9" fill="#dcdcdc" stroke="#999" stroke-opacity=".8"/></g>
</g></svg>
<div id="pscroll"><div class="th"></div></div>

<div class="abs" style="left:82.800px;top:18.700px;width:0.900px;height:17.300px;background:#ccc"></div>
<!-- tabs -->
<div id="tabs">
<div class="tab" style="left:11.600px;width:64px">External data to his<span class="fd"></span></div>
<div class="tab" style="left:78.600px;width:64px">Mikon Tag Import</div>
<div class="tab" style="left:145.600px;width:64px">Well Test calculatic<span class="fd"></span></div>
<div class="tab" style="left:212.600px;width:64px">Tank Fill Events</div>
<div class="tab dis" style="left:279.600px;width:65px;padding-left:11.500px">Differential Tank<svg class="abs" style="left:5.500px;top:4.200px" width="6" height="6" viewBox="0 0 6 6"><circle cx="3" cy="3" r="2.200" fill="none" stroke="#aaa" stroke-width="0.700"/><path d="M1.500 4.500l3-3" stroke="#aaa" stroke-width="0.700"/></svg></div>
<div class="tab" style="left:347px;width:20px;padding-left:4.500px">Inje</div>
<div class="abs" style="left:362.800px;top:0;width:39px;height:16.200px;background:#fff"></div>
<svg class="abs" style="left:364px;top:2px" width="36" height="13" viewBox="0 0 36 13">
<path d="M2.300 3.300l3.600 3-3.600 3z" fill="#555"/>
<path d="M11.600 6.300h5M14.100 3.800v5" stroke="#555" stroke-width="1"/>
<path d="M27.800 5.600h3l-1.500 1.800z" fill="#666"/>
</svg>
</div>

<!-- canvas -->
<div id="canvas">
<svg width="396" height="586" viewBox="0 0 396 586" style="position:absolute;left:0;top:0">
<g transform="translate(18.4,17.6) scale(0.46)">
<path d="M-60 -60V1300M-40 -60V1300M-20 -60V1300M0 -60V1300M20 -60V1300M40 -60V1300M60 -60V1300M80 -60V1300M100 -60V1300M120 -60V1300M140 -60V1300M160 -60V1300M180 -60V1300M200 -60V1300M220 -60V1300M240 -60V1300M260 -60V1300M280 -60V1300M300 -60V1300M320 -60V1300M340 -60V1300M360 -60V1300M380 -60V1300M400 -60V1300M420 -60V1300M440 -60V1300M460 -60V1300M480 -60V1300M500 -60V1300M520 -60V1300M540 -60V1300M560 -60V1300M580 -60V1300M600 -60V1300M620 -60V1300M640 -60V1300M660 -60V1300M680 -60V1300M700 -60V1300M720 -60V1300M740 -60V1300M760 -60V1300M780 -60V1300M800 -60V1300M820 -60V1300M840 -60V1300M860 -60V1300M880 -60V1300M900 -60V1300M-60 -60H900M-60 -40H900M-60 -20H900M-60 0H900M-60 20H900M-60 40H900M-60 60H900M-60 80H900M-60 100H900M-60 120H900M-60 140H900M-60 160H900M-60 180H900M-60 200H900M-60 220H900M-60 240H900M-60 260H900M-60 280H900M-60 300H900M-60 320H900M-60 340H900M-60 360H900M-60 380H900M-60 400H900M-60 420H900M-60 440H900M-60 460H900M-60 480H900M-60 500H900M-60 520H900M-60 540H900M-60 560H900M-60 580H900M-60 600H900M-60 620H900M-60 640H900M-60 660H900M-60 680H900M-60 700H900M-60 720H900M-60 740H900M-60 760H900M-60 780H900M-60 800H900M-60 820H900M-60 840H900M-60 860H900M-60 880H900M-60 900H900M-60 920H900M-60 940H900M-60 960H900M-60 980H900M-60 1000H900M-60 1020H900M-60 1040H900M-60 1060H900M-60 1080H900M-60 1100H900M-60 1120H900M-60 1140H900M-60 1160H900M-60 1180H900M-60 1200H900M-60 1220H900M-60 1240H900M-60 1260H900" stroke="#eee" stroke-width="1" fill="none"/>
<path d="M 220 40 C 234 40 248 40 248 50 S 234 60 110 60 S -28 60 -28 70 S -14 80 0 80" fill="none" stroke="#999" stroke-width="3" stroke-linecap="round"/>
<path d="M 240 80 C 254 80 268 80 268 90 S 254 100 120 100 S -28 100 -28 110 S -14 120 0 120" fill="none" stroke="#999" stroke-width="3" stroke-linecap="round"/>
<path d="M 220 120 C 234 120 248 120 248 130 S 234 140 110 140 S -28 140 -28 150 S -14 160 0 160" fill="none" stroke="#999" stroke-width="3" stroke-linecap="round"/>
<path d="M 140 160 C 154 160 168 160 168 170 S 154 180 70 180 S -28 180 -28 190 S -14 200 0 200" fill="none" stroke="#999" stroke-width="3" stroke-linecap="round"/>
<path d="M 560 40 C 574 40 588 40 588 50 S 574 60 500 60 S 412 60 412 70 S 426 80 440 80" fill="none" stroke="#999" stroke-width="3" stroke-linecap="round"/>
<path d="M 700 80 C 714 80 728 80 728 90 S 714 100 570 100 S 412 100 412 110 S 426 120 440 120" fill="none" stroke="#999" stroke-width="3" stroke-linecap="round"/>
<path d="M 620 126.5 C 633.35 126.5 646.7 126.5 646.7 134.75 S 633.35 143 530 143 S 413.3 143 413.3 151.5 S 426.65 160 440 160" fill="none" stroke="#999" stroke-width="3" stroke-linecap="round"/>
<path d="M 740 166.5 C 753.35 166.5 766.7 166.5 766.7 174.75 S 753.35 183 590 183 S 413.3 183 413.3 191.5 S 426.65 200 440 200" fill="none" stroke="#999" stroke-width="3" stroke-linecap="round"/>
<path d="M 580 200 C 598 200 616 200 616 185 S 616 170 510 160 S 404 150 404 135 S 422 120 440 120" fill="none" stroke="#999" stroke-width="3" stroke-linecap="round"/>
<path d="M 580 200 C 623.5 200 594.5 200 638 200" fill="none" stroke="#999" stroke-width="3" stroke-linecap="round"/>
<path d="M 580 200 C 632.84 200 585.16 240 638 240" fill="none" stroke="#999" stroke-width="3" stroke-linecap="round"/>
<path d="M 580 200 C 654.11 200 563.89 280 638 280" fill="none" stroke="#999" stroke-width="3" stroke-linecap="round"/>
<path d="M 580 200 C 655 200 563 320 638 320" fill="none" stroke="#999" stroke-width="3" stroke-linecap="round"/>
<path d="M 740 153.5 C 815 153.5 865 173.5 940 173.5" fill="none" stroke="#999" stroke-width="3" stroke-linecap="round"/>
<path d="M 120 440 C 134 440 148 440 148 450 S 134 460 60 460 S -28 460 -28 470 S -14 480 0 480" fill="none" stroke="#999" stroke-width="3" stroke-linecap="round"/>
<path d="M 560 440 C 574 440 588 440 588 450 S 574 460 500 460 S 412 460 412 470 S 426 480 440 480" fill="none" stroke="#999" stroke-width="3" stroke-linecap="round"/>
<path d="M 660 480 C 674 480 688 480 688 490 S 674 500 550 500 S 412 500 412 510 S 426 520 440 520" fill="none" stroke="#999" stroke-width="3" stroke-linecap="round"/>
<path d="M 580 640 C 610 640 590 640 620 640" fill="none" stroke="#999" stroke-width="3" stroke-linecap="round"/>
<path d="M 760 640 C 790 640 770 640 800 640" fill="none" stroke="#999" stroke-width="3" stroke-linecap="round"/>
<path d="M 120 640 C 134 640 148 640 148 650 S 134 660 60 660 S -28 660 -28 670 S -14 680 0 680" fill="none" stroke="#999" stroke-width="3" stroke-linecap="round"/>
<path d="M 140 680 C 154 680 168 680 168 690 S 154 700 70 700 S -28 700 -28 710 S -14 720 0 720" fill="none" stroke="#999" stroke-width="3" stroke-linecap="round"/>
<path d="M 180 713.5 C 210.39 713.5 189.61 720 220 720" fill="none" stroke="#999" stroke-width="3" stroke-linecap="round"/>
<path d="M 180 726.5 C 193.35 726.5 206.7 726.5 206.7 734.75 S 193.35 743 90 743 S -26.7 743 -26.7 751.5 S -13.35 760 0 760" fill="none" stroke="#999" stroke-width="3" stroke-linecap="round"/>
<path d="M 140 760 C 154 760 168 760 168 770 S 154 780 70 780 S -28 780 -28 790 S -14 800 0 800" fill="none" stroke="#999" stroke-width="3" stroke-linecap="round"/>
<path d="M 140 800 C 154 800 168 800 168 810 S 154 820 70 820 S -28 820 -28 830 S -14 840 0 840" fill="none" stroke="#999" stroke-width="3" stroke-linecap="round"/>
<path d="M 140 840 C 154 840 168 840 168 850 S 154 860 70 860 S -28 860 -28 870 S -14 880 0 880" fill="none" stroke="#999" stroke-width="3" stroke-linecap="round"/>
<path d="M 140 880 C 154 880 168 880 168 890 S 154 900 70 900 S -28 900 -28 910 S -14 920 0 920" fill="none" stroke="#999" stroke-width="3" stroke-linecap="round"/>
<path d="M 140 920 C 160 920 180 920 180 905 S 180 890 70 820 S -40 750 -40 735 S -20 720 0 720" fill="none" stroke="#999" stroke-width="3" stroke-linecap="round"/>
<g transform="translate(0,-15)"><rect rx="5" ry="5" width="220" height="30" fill="#ffffff" stroke="#999"/><g transform="translate(0,0)"><path d="M30 0.500h-25a4.500 4.500 0 0 0-4.500 4.500v20a4.500 4.500 0 0 0 4.500 4.500h25z" fill="#000" fill-opacity="0.05"/><path d="M30 1v28" stroke="#000" stroke-opacity="0.1"/><path d="M15 8c-4.4 0-8 2.7-8 6 0 1.9 1.1 3.500 2.900 4.600-.2 1.300-.9 2.500-1.900 3.400 2-.2 3.700-1 5-2.200.6.1 1.300.2 2 .2 4.400 0 8-2.700 8-6s-3.600-6-8-6z" fill="none" stroke="#ccc" stroke-width="1.6"/></g><text x="38" y="20" font-size="14" fill="#333" font-style="italic">Calculate Rate of Outflow</text></g>
<g transform="translate(0,25)"><g transform="translate(-25,2)"><rect rx="5" ry="5" width="32" height="26" fill="#eee" stroke="#999"/><rect x="5" y="4" rx="4" ry="4" width="16" height="18" fill="#a6bbcf"/></g><rect rx="5" ry="5" width="220" height="30" fill="#a6bbcf" stroke="#999"/><g transform="translate(0,0)"><path d="M30 0.500h-25a4.500 4.500 0 0 0-4.500 4.500v20a4.500 4.500 0 0 0 4.500 4.500h25z" fill="#000" fill-opacity="0.05"/><path d="M30 1v28" stroke="#000" stroke-opacity="0.1"/><path d="M12.800 4.300h3.800l5.200 10.700-5.200 10.700h-3.800l5.200-10.700z" fill="#fff"/><rect x="8.800" y="10" width="9" height="3.500" fill="#fff"/><rect x="8.800" y="16.500" width="9" height="3.500" fill="#fff"/></g><text x="38" y="20" font-size="14" fill="#333" font-style="italic">Schedule - every 5 mins</text><rect x="215" y="10" rx="3" ry="3" width="10" height="10" fill="#d9d9d9" stroke="#999"/></g>
<g transform="translate(0,65)"><rect rx="5" ry="5" width="240" height="30" fill="#fdd0a2" stroke="#999"/><g transform="translate(0,0)"><path d="M30 0.500h-25a4.500 4.500 0 0 0-4.500 4.500v20a4.500 4.500 0 0 0 4.500 4.500h25z" fill="#000" fill-opacity="0.05"/><path d="M30 1v28" stroke="#000" stroke-opacity="0.1"/><path d="M21 7.300c-.7-2.100-3.900-2.100-4.500 1.100l-2.900 13.600c-.6 3.100-3.300 3.300-4.500 1.500M10.800 12.800h8.400" fill="none" stroke="#fff" stroke-width="2.600" stroke-linecap="round"/></g><text x="38" y="20" font-size="14" fill="#333" font-style="italic">Configure Parameters Here</text><rect x="-5" y="10" rx="3" ry="3" width="10" height="10" fill="#d9d9d9" stroke="#999"/><rect x="235" y="10" rx="3" ry="3" width="10" height="10" fill="#d9d9d9" stroke="#999"/></g>
<g transform="translate(0,105)"><rect rx="5" ry="5" width="220" height="30" fill="#fdd0a2" stroke="#999"/><g transform="translate(0,0)"><path d="M30 0.500h-25a4.500 4.500 0 0 0-4.500 4.500v20a4.500 4.500 0 0 0 4.500 4.500h25z" fill="#000" fill-opacity="0.05"/><path d="M30 1v28" stroke="#000" stroke-opacity="0.1"/><path d="M21 7.300c-.7-2.100-3.900-2.100-4.500 1.100l-2.900 13.600c-.6 3.100-3.300 3.300-4.500 1.500M10.800 12.800h8.400" fill="none" stroke="#fff" stroke-width="2.600" stroke-linecap="round"/></g><text x="38" y="20" font-size="14" fill="#333" font-style="italic">Tank outflow estimation</text><rect x="-5" y="10" rx="3" ry="3" width="10" height="10" fill="#d9d9d9" stroke="#999"/><rect x="215" y="10" rx="3" ry="3" width="10" height="10" fill="#d9d9d9" stroke="#999"/></g>
<g transform="translate(0,145)"><rect rx="5" ry="5" width="140" height="30" fill="#e7e7ae" stroke="#999"/><g transform="translate(0,0)"><path d="M30 0.500h-25a4.500 4.500 0 0 0-4.500 4.500v20a4.500 4.500 0 0 0 4.500 4.500h25z" fill="#000" fill-opacity="0.05"/><path d="M30 1v28" stroke="#000" stroke-opacity="0.1"/><circle cx="15" cy="15" r="7.600" fill="#fff" fill-opacity="0.25" stroke="#fff" stroke-width="1" stroke-opacity="0.7"/><path d="M9.500 10.500c2-2.500 5-3.500 7.500-2.800l1.500 2.300-2 1.200-.5 2.300-2.500.5-1 2.500-2.500-1.500z" fill="#fff"/><path d="M16 14.500l3.500-1.500 2.800 1.500c.3 2.500-.8 5-3 6.500l-1.300-2.500-2.500-.8z" fill="#fff"/><path d="M11 17.500l2.500 1 .5 3.500c-1.500-.5-3-2-3.500-3.500z" fill="#fff"/></g><text x="38" y="20" font-size="14" fill="#333">http request</text><rect x="-5" y="10" rx="3" ry="3" width="10" height="10" fill="#d9d9d9" stroke="#999"/><rect x="135" y="10" rx="3" ry="3" width="10" height="10" fill="#d9d9d9" stroke="#999"/></g>
<g transform="translate(0,185)"><g transform="translate(294,2)"><rect rx="5" ry="5" width="32" height="26" fill="#eee" fill-opacity="1" stroke="#999"/><rect x="11" y="4" rx="4" ry="4" width="16" height="18" fill="#87a980" fill-opacity="1"/></g><rect rx="5" ry="5" width="300" height="30" fill="#87a980" stroke="#999"/><g transform="translate(270,0)"><path d="M0 0.500h25a4.500 4.500 0 0 1 4.500 4.500v20a4.500 4.500 0 0 1-4.500 4.500h-25z" fill="#000" fill-opacity="0.05"/><path d="M0 1v28" stroke="#000" stroke-opacity="0.1"/><rect x="10" y="7.2" width="10" height="2.6" fill="#fff" opacity="0.9"/><rect x="10" y="11.4" width="10" height="2.6" fill="#fff" opacity="0.9"/><rect x="10" y="15.6" width="10" height="2.6" fill="#fff" opacity="0.9"/><rect x="10" y="19.8" width="10" height="2.6" fill="#fff" opacity="0.9"/></g><text x="262" y="20" text-anchor="end" font-size="14" fill="#333" font-style="italic">Debug Tank Outflow - main function</text><rect x="-5" y="10" rx="3" ry="3" width="10" height="10" fill="#d9d9d9" stroke="#999"/></g>
<g transform="translate(440,-15)"><rect rx="5" ry="5" width="140" height="30" fill="#ffffff" stroke="#999"/><g transform="translate(0,0)"><path d="M30 0.500h-25a4.500 4.500 0 0 0-4.500 4.500v20a4.500 4.500 0 0 0 4.500 4.500h25z" fill="#000" fill-opacity="0.05"/><path d="M30 1v28" stroke="#000" stroke-opacity="0.1"/><path d="M15 8c-4.4 0-8 2.7-8 6 0 1.9 1.1 3.500 2.900 4.600-.2 1.300-.9 2.500-1.900 3.400 2-.2 3.700-1 5-2.200.6.1 1.300.2 2 .2 4.400 0 8-2.700 8-6s-3.600-6-8-6z" fill="none" stroke="#ccc" stroke-width="1.6"/></g><text x="38" y="20" font-size="14" fill="#333" font-style="italic">Run Backfill</text></g>
<g transform="translate(440,25)"><g transform="translate(-25,2)"><rect rx="5" ry="5" width="32" height="26" fill="#eee" stroke="#999"/><rect x="5" y="4" rx="4" ry="4" width="16" height="18" fill="#a6bbcf"/></g><rect rx="5" ry="5" width="120" height="30" fill="#a6bbcf" stroke="#999"/><g transform="translate(0,0)"><path d="M30 0.500h-25a4.500 4.500 0 0 0-4.500 4.500v20a4.500 4.500 0 0 0 4.500 4.500h25z" fill="#000" fill-opacity="0.05"/><path d="M30 1v28" stroke="#000" stroke-opacity="0.1"/><path d="M12.800 4.300h3.800l5.200 10.700-5.200 10.700h-3.800l5.200-10.700z" fill="#fff"/><rect x="8.800" y="10" width="9" height="3.500" fill="#fff"/><rect x="8.800" y="16.500" width="9" height="3.500" fill="#fff"/></g><text x="38" y="20" font-size="14" fill="#333">timestamp</text><rect x="115" y="10" rx="3" ry="3" width="10" height="10" fill="#d9d9d9" stroke="#999"/></g>
<g transform="translate(440,65)"><rect rx="5" ry="5" width="260" height="30" fill="#fdd0a2" stroke="#999"/><g transform="translate(0,0)"><path d="M30 0.500h-25a4.500 4.500 0 0 0-4.500 4.500v20a4.500 4.500 0 0 0 4.500 4.500h25z" fill="#000" fill-opacity="0.05"/><path d="M30 1v28" stroke="#000" stroke-opacity="0.1"/><path d="M21 7.300c-.7-2.100-3.900-2.100-4.500 1.100l-2.900 13.600c-.6 3.100-3.300 3.300-4.500 1.500M10.800 12.800h8.400" fill="none" stroke="#fff" stroke-width="2.600" stroke-linecap="round"/></g><text x="38" y="20" font-size="14" fill="#333" font-style="italic">Configure Backfill Period Here</text><rect x="-5" y="10" rx="3" ry="3" width="10" height="10" fill="#d9d9d9" stroke="#999"/><rect x="255" y="10" rx="3" ry="3" width="10" height="10" fill="#d9d9d9" stroke="#999"/></g>
<g transform="translate(440,105)"><rect rx="5" ry="5" width="180" height="30" fill="#e6e0f8" stroke="#999"/><g transform="translate(0,0)"><path d="M30 0.500h-25a4.500 4.500 0 0 0-4.500 4.500v20a4.500 4.500 0 0 0 4.500 4.500h25z" fill="#000" fill-opacity="0.05"/><path d="M30 1v28" stroke="#000" stroke-opacity="0.1"/><path d="M21.300 17.800a6.800 6.800 0 1 1-1-7.200" fill="none" stroke="#fff" stroke-width="2.600" opacity="0.95"/><path d="M17.500 6l6 1.200-2.600 5.500z" fill="#fff"/><path d="M15 11.500v4l2.500 1.500" stroke="#fff" stroke-width="1.500" fill="none" opacity="0.9"/></g><text x="38" y="20" font-size="14" fill="#333">Enumeration Loop</text><rect x="-5" y="10" rx="3" ry="3" width="10" height="10" fill="#d9d9d9" stroke="#999"/><rect x="175" y="3.5" rx="3" ry="3" width="10" height="10" fill="#d9d9d9" stroke="#999"/><rect x="175" y="16.5" rx="3" ry="3" width="10" height="10" fill="#d9d9d9" stroke="#999"/></g>
<g transform="translate(440,145)"><rect rx="5" ry="5" width="300" height="30" fill="#fdd0a2" stroke="#999"/><g transform="translate(0,0)"><path d="M30 0.500h-25a4.500 4.500 0 0 0-4.500 4.500v20a4.500 4.500 0 0 0 4.500 4.500h25z" fill="#000" fill-opacity="0.05"/><path d="M30 1v28" stroke="#000" stroke-opacity="0.1"/><path d="M21 7.300c-.7-2.100-3.900-2.100-4.500 1.100l-2.900 13.600c-.6 3.100-3.300 3.300-4.500 1.500M10.800 12.800h8.400" fill="none" stroke="#fff" stroke-width="2.600" stroke-linecap="round"/></g><text x="38" y="20" font-size="14" fill="#333" font-style="italic">Backfill tank flow data main function</text><rect x="-5" y="10" rx="3" ry="3" width="10" height="10" fill="#d9d9d9" stroke="#999"/><rect x="295" y="3.5" rx="3" ry="3" width="10" height="10" fill="#d9d9d9" stroke="#999"/><rect x="295" y="16.5" rx="3" ry="3" width="10" height="10" fill="#d9d9d9" stroke="#999"/></g>
<g transform="translate(440,185)"><rect rx="5" ry="5" width="140" height="30" fill="#e7e7ae" stroke="#999"/><g transform="translate(0,0)"><path d="M30 0.500h-25a4.500 4.500 0 0 0-4.500 4.500v20a4.500 4.500 0 0 0 4.500 4.500h25z" fill="#000" fill-opacity="0.05"/><path d="M30 1v28" stroke="#000" stroke-opacity="0.1"/><circle cx="15" cy="15" r="7.600" fill="#fff" fill-opacity="0.25" stroke="#fff" stroke-width="1" stroke-opacity="0.7"/><path d="M9.500 10.500c2-2.500 5-3.500 7.500-2.800l1.500 2.300-2 1.200-.5 2.300-2.500.5-1 2.500-2.500-1.500z" fill="#fff"/><path d="M16 14.500l3.500-1.500 2.800 1.500c.3 2.500-.8 5-3 6.500l-1.300-2.500-2.500-.8z" fill="#fff"/><path d="M11 17.500l2.500 1 .5 3.500c-1.500-.5-3-2-3.500-3.500z" fill="#fff"/></g><text x="38" y="20" font-size="14" fill="#333">http request</text><rect x="-5" y="10" rx="3" ry="3" width="10" height="10" fill="#d9d9d9" stroke="#999"/><rect x="135" y="10" rx="3" ry="3" width="10" height="10" fill="#d9d9d9" stroke="#999"/></g>
<g transform="translate(638,185)"><g transform="translate(106,2)"><rect rx="5" ry="5" width="32" height="26" fill="#eee" fill-opacity="0.2" stroke="#999"/><rect x="11" y="4" rx="4" ry="4" width="16" height="18" fill="#87a980" fill-opacity="0.2"/></g><rect rx="5" ry="5" width="120" height="30" fill="#87a980" stroke="#999"/><g transform="translate(90,0)"><path d="M0 0.500h25a4.500 4.500 0 0 1 4.500 4.500v20a4.500 4.500 0 0 1-4.500 4.500h-25z" fill="#000" fill-opacity="0.05"/><path d="M0 1v28" stroke="#000" stroke-opacity="0.1"/><rect x="10" y="7.2" width="10" height="2.6" fill="#fff" opacity="0.9"/><rect x="10" y="11.4" width="10" height="2.6" fill="#fff" opacity="0.9"/><rect x="10" y="15.6" width="10" height="2.6" fill="#fff" opacity="0.9"/><rect x="10" y="19.8" width="10" height="2.6" fill="#fff" opacity="0.9"/></g><text x="82" y="20" text-anchor="end" font-size="14" fill="#333" font-style="italic">Response</text><rect x="-5" y="10" rx="3" ry="3" width="10" height="10" fill="#d9d9d9" stroke="#999"/></g>
<g transform="translate(638,225)"><g transform="translate(114,2)"><rect rx="5" ry="5" width="32" height="26" fill="#eee" fill-opacity="1" stroke="#999"/><rect x="11" y="4" rx="4" ry="4" width="16" height="18" fill="#87a980" fill-opacity="1"/></g><rect rx="5" ry="5" width="120" height="30" fill="#87a980" stroke="#999"/><g transform="translate(90,0)"><path d="M0 0.500h25a4.500 4.500 0 0 1 4.500 4.500v20a4.500 4.500 0 0 1-4.500 4.500h-25z" fill="#000" fill-opacity="0.05"/><path d="M0 1v28" stroke="#000" stroke-opacity="0.1"/><rect x="10" y="7.2" width="10" height="2.6" fill="#fff" opacity="0.9"/><rect x="10" y="11.4" width="10" height="2.6" fill="#fff" opacity="0.9"/><rect x="10" y="15.6" width="10" height="2.6" fill="#fff" opacity="0.9"/><rect x="10" y="19.8" width="10" height="2.6" fill="#fff" opacity="0.9"/></g><text x="82" y="20" text-anchor="end" font-size="14" fill="#333" font-style="italic">Progress</text><rect x="-5" y="10" rx="3" ry="3" width="10" height="10" fill="#d9d9d9" stroke="#999"/></g>
<g transform="translate(638,265)"><g transform="translate(146,2)"><rect rx="5" ry="5" width="32" height="26" fill="#eee" fill-opacity="0.2" stroke="#999"/><rect x="11" y="4" rx="4" ry="4" width="16" height="18" fill="#87a980" fill-opacity="0.2"/></g><rect rx="5" ry="5" width="160" height="30" fill="#87a980" stroke="#999"/><g transform="translate(130,0)"><path d="M0 0.500h25a4.500 4.500 0 0 1 4.500 4.500v20a4.500 4.500 0 0 1-4.500 4.500h-25z" fill="#000" fill-opacity="0.05"/><path d="M0 1v28" stroke="#000" stroke-opacity="0.1"/><rect x="10" y="7.2" width="10" height="2.6" fill="#fff" opacity="0.9"/><rect x="10" y="11.4" width="10" height="2.6" fill="#fff" opacity="0.9"/><rect x="10" y="15.6" width="10" height="2.6" fill="#fff" opacity="0.9"/><rect x="10" y="19.8" width="10" height="2.6" fill="#fff" opacity="0.9"/></g><text x="122" y="20" text-anchor="end" font-size="14" fill="#333" font-style="italic">Simple Debug</text><rect x="-5" y="10" rx="3" ry="3" width="10" height="10" fill="#d9d9d9" stroke="#999"/></g>
<g transform="translate(638,305)"><g transform="translate(126,2)"><rect rx="5" ry="5" width="32" height="26" fill="#eee" fill-opacity="0.2" stroke="#999"/><rect x="11" y="4" rx="4" ry="4" width="16" height="18" fill="#87a980" fill-opacity="0.2"/></g><rect rx="5" ry="5" width="140" height="30" fill="#87a980" stroke="#999"/><g transform="translate(110,0)"><path d="M0 0.500h25a4.500 4.500 0 0 1 4.500 4.500v20a4.500 4.500 0 0 1-4.500 4.500h-25z" fill="#000" fill-opacity="0.05"/><path d="M0 1v28" stroke="#000" stroke-opacity="0.1"/><rect x="10" y="7.2" width="10" height="2.6" fill="#fff" opacity="0.9"/><rect x="10" y="11.4" width="10" height="2.6" fill="#fff" opacity="0.9"/><rect x="10" y="15.6" width="10" height="2.6" fill="#fff" opacity="0.9"/><rect x="10" y="19.8" width="10" height="2.6" fill="#fff" opacity="0.9"/></g><text x="102" y="20" text-anchor="end" font-size="14" fill="#333" font-style="italic">Full Debug</text><rect x="-5" y="10" rx="3" ry="3" width="10" height="10" fill="#d9d9d9" stroke="#999"/></g>
<g transform="translate(0,385)"><rect rx="5" ry="5" width="220" height="30" fill="#ffffff" stroke="#999"/><g transform="translate(0,0)"><path d="M30 0.500h-25a4.500 4.500 0 0 0-4.500 4.500v20a4.500 4.500 0 0 0 4.500 4.500h25z" fill="#000" fill-opacity="0.05"/><path d="M30 1v28" stroke="#000" stroke-opacity="0.1"/><path d="M15 8c-4.4 0-8 2.7-8 6 0 1.9 1.1 3.500 2.900 4.600-.2 1.300-.9 2.500-1.900 3.400 2-.2 3.700-1 5-2.200.6.1 1.300.2 2 .2 4.400 0 8-2.700 8-6s-3.600-6-8-6z" fill="none" stroke="#ccc" stroke-width="1.6"/></g><text x="38" y="20" font-size="14" fill="#333" font-style="italic">Reset Average for a tank</text></g>
<g transform="translate(0,425)"><g transform="translate(-25,2)"><rect rx="5" ry="5" width="32" height="26" fill="#eee" stroke="#999"/><rect x="5" y="4" rx="4" ry="4" width="16" height="18" fill="#a6bbcf"/></g><rect rx="5" ry="5" width="120" height="30" fill="#a6bbcf" stroke="#999"/><g transform="translate(0,0)"><path d="M30 0.500h-25a4.500 4.500 0 0 0-4.500 4.500v20a4.500 4.500 0 0 0 4.500 4.500h25z" fill="#000" fill-opacity="0.05"/><path d="M30 1v28" stroke="#000" stroke-opacity="0.1"/><path d="M12.800 4.300h3.800l5.200 10.700-5.200 10.700h-3.800l5.200-10.700z" fill="#fff"/><rect x="8.800" y="10" width="9" height="3.500" fill="#fff"/><rect x="8.800" y="16.500" width="9" height="3.500" fill="#fff"/></g><text x="38" y="20" font-size="14" fill="#333">timestamp</text><rect x="115" y="10" rx="3" ry="3" width="10" height="10" fill="#d9d9d9" stroke="#999"/></g>
<g transform="translate(0,465)"><rect rx="5" ry="5" width="120" height="30" fill="#fdd0a2" stroke="#999"/><g transform="translate(0,0)"><path d="M30 0.500h-25a4.500 4.500 0 0 0-4.500 4.500v20a4.500 4.500 0 0 0 4.500 4.500h25z" fill="#000" fill-opacity="0.05"/><path d="M30 1v28" stroke="#000" stroke-opacity="0.1"/><path d="M21 7.300c-.7-2.100-3.900-2.100-4.500 1.100l-2.900 13.600c-.6 3.100-3.300 3.300-4.500 1.500M10.800 12.800h8.400" fill="none" stroke="#fff" stroke-width="2.600" stroke-linecap="round"/></g><text x="38" y="20" font-size="14" fill="#333" font-style="italic">function 8</text><rect x="-5" y="10" rx="3" ry="3" width="10" height="10" fill="#d9d9d9" stroke="#999"/><rect x="115" y="10" rx="3" ry="3" width="10" height="10" fill="#d9d9d9" stroke="#999"/></g>
<g transform="translate(440,385)"><rect rx="5" ry="5" width="220" height="30" fill="#ffffff" stroke="#999"/><g transform="translate(0,0)"><path d="M30 0.500h-25a4.500 4.500 0 0 0-4.500 4.500v20a4.500 4.500 0 0 0 4.500 4.500h25z" fill="#000" fill-opacity="0.05"/><path d="M30 1v28" stroke="#000" stroke-opacity="0.1"/><path d="M15 8c-4.4 0-8 2.7-8 6 0 1.9 1.1 3.500 2.900 4.600-.2 1.300-.9 2.500-1.900 3.400 2-.2 3.700-1 5-2.200.6.1 1.300.2 2 .2 4.400 0 8-2.700 8-6s-3.600-6-8-6z" fill="none" stroke="#ccc" stroke-width="1.6"/></g><text x="38" y="20" font-size="14" fill="#333" font-style="italic">Reset persistent variables</text></g>
<g transform="translate(440,425)"><g transform="translate(-25,2)"><rect rx="5" ry="5" width="32" height="26" fill="#eee" stroke="#999"/><rect x="5" y="4" rx="4" ry="4" width="16" height="18" fill="#a6bbcf"/></g><rect rx="5" ry="5" width="120" height="30" fill="#a6bbcf" stroke="#999"/><g transform="translate(0,0)"><path d="M30 0.500h-25a4.500 4.500 0 0 0-4.500 4.500v20a4.500 4.500 0 0 0 4.500 4.500h25z" fill="#000" fill-opacity="0.05"/><path d="M30 1v28" stroke="#000" stroke-opacity="0.1"/><path d="M12.800 4.300h3.800l5.200 10.700-5.200 10.700h-3.800l5.200-10.700z" fill="#fff"/><rect x="8.800" y="10" width="9" height="3.500" fill="#fff"/><rect x="8.800" y="16.500" width="9" height="3.500" fill="#fff"/></g><text x="38" y="20" font-size="14" fill="#333">timestamp</text><rect x="115" y="10" rx="3" ry="3" width="10" height="10" fill="#d9d9d9" stroke="#999"/></g>
<g transform="translate(440,465)"><rect rx="5" ry="5" width="220" height="30" fill="#fdd0a2" stroke="#999"/><g transform="translate(0,0)"><path d="M30 0.500h-25a4.500 4.500 0 0 0-4.500 4.500v20a4.500 4.500 0 0 0 4.500 4.500h25z" fill="#000" fill-opacity="0.05"/><path d="M30 1v28" stroke="#000" stroke-opacity="0.1"/><path d="M21 7.300c-.7-2.100-3.900-2.100-4.500 1.100l-2.900 13.600c-.6 3.100-3.300 3.300-4.500 1.500M10.800 12.800h8.400" fill="none" stroke="#fff" stroke-width="2.600" stroke-linecap="round"/></g><text x="38" y="20" font-size="14" fill="#333" font-style="italic">Reset Persistent Variables</text><rect x="-5" y="10" rx="3" ry="3" width="10" height="10" fill="#d9d9d9" stroke="#999"/><rect x="215" y="10" rx="3" ry="3" width="10" height="10" fill="#d9d9d9" stroke="#999"/></g>
<g transform="translate(440,505)"><g transform="translate(114,2)"><rect rx="5" ry="5" width="32" height="26" fill="#eee" fill-opacity="1" stroke="#999"/><rect x="11" y="4" rx="4" ry="4" width="16" height="18" fill="#87a980" fill-opacity="1"/></g><rect rx="5" ry="5" width="120" height="30" fill="#87a980" stroke="#999"/><g transform="translate(90,0)"><path d="M0 0.500h25a4.500 4.500 0 0 1 4.500 4.500v20a4.500 4.500 0 0 1-4.500 4.500h-25z" fill="#000" fill-opacity="0.05"/><path d="M0 1v28" stroke="#000" stroke-opacity="0.1"/><rect x="10" y="7.2" width="10" height="2.6" fill="#fff" opacity="0.9"/><rect x="10" y="11.4" width="10" height="2.6" fill="#fff" opacity="0.9"/><rect x="10" y="15.6" width="10" height="2.6" fill="#fff" opacity="0.9"/><rect x="10" y="19.8" width="10" height="2.6" fill="#fff" opacity="0.9"/></g><text x="82" y="20" text-anchor="end" font-size="14" fill="#333" font-style="italic">debug 66</text><rect x="-5" y="10" rx="3" ry="3" width="10" height="10" fill="#d9d9d9" stroke="#999"/></g>
<g transform="translate(440,585)"><rect rx="5" ry="5" width="280" height="30" fill="#ffffff" stroke="#999"/><g transform="translate(0,0)"><path d="M30 0.500h-25a4.500 4.500 0 0 0-4.500 4.500v20a4.500 4.500 0 0 0 4.500 4.500h25z" fill="#000" fill-opacity="0.05"/><path d="M30 1v28" stroke="#000" stroke-opacity="0.1"/><path d="M15 8c-4.4 0-8 2.7-8 6 0 1.9 1.1 3.500 2.900 4.600-.2 1.300-.9 2.500-1.900 3.400 2-.2 3.700-1 5-2.200.6.1 1.300.2 2 .2 4.400 0 8-2.700 8-6s-3.600-6-8-6z" fill="none" stroke="#ccc" stroke-width="1.6"/></g><text x="38" y="20" font-size="14" fill="#333" font-style="italic">5 minute time interval function tests</text></g>
<g transform="translate(460,625)"><g transform="translate(-25,2)"><rect rx="5" ry="5" width="32" height="26" fill="#eee" stroke="#999"/><rect x="5" y="4" rx="4" ry="4" width="16" height="18" fill="#a6bbcf"/></g><rect rx="5" ry="5" width="120" height="30" fill="#a6bbcf" stroke="#999"/><g transform="translate(0,0)"><path d="M30 0.500h-25a4.500 4.500 0 0 0-4.500 4.500v20a4.500 4.500 0 0 0 4.500 4.500h25z" fill="#000" fill-opacity="0.05"/><path d="M30 1v28" stroke="#000" stroke-opacity="0.1"/><path d="M12.800 4.300h3.800l5.200 10.700-5.200 10.700h-3.800l5.200-10.700z" fill="#fff"/><rect x="8.800" y="10" width="9" height="3.500" fill="#fff"/><rect x="8.800" y="16.500" width="9" height="3.500" fill="#fff"/></g><text x="38" y="20" font-size="14" fill="#333">timestamp</text><rect x="115" y="10" rx="3" ry="3" width="10" height="10" fill="#d9d9d9" stroke="#999"/></g>
<g transform="translate(620,625)"><rect rx="5" ry="5" width="140" height="30" fill="#fdd0a2" stroke="#999"/><g transform="translate(0,0)"><path d="M30 0.500h-25a4.500 4.500 0 0 0-4.500 4.500v20a4.500 4.500 0 0 0 4.500 4.500h25z" fill="#000" fill-opacity="0.05"/><path d="M30 1v28" stroke="#000" stroke-opacity="0.1"/><path d="M21 7.300c-.7-2.100-3.900-2.100-4.500 1.100l-2.900 13.600c-.6 3.100-3.300 3.300-4.500 1.500M10.800 12.800h8.400" fill="none" stroke="#fff" stroke-width="2.600" stroke-linecap="round"/></g><text x="38" y="20" font-size="14" fill="#333" font-style="italic">function 13</text><rect x="-5" y="10" rx="3" ry="3" width="10" height="10" fill="#d9d9d9" stroke="#999"/><rect x="135" y="10" rx="3" ry="3" width="10" height="10" fill="#d9d9d9" stroke="#999"/></g>
<g transform="translate(800,625)"><g transform="translate(114,2)"><rect rx="5" ry="5" width="32" height="26" fill="#eee" fill-opacity="1" stroke="#999"/><rect x="11" y="4" rx="4" ry="4" width="16" height="18" fill="#87a980" fill-opacity="1"/></g><rect rx="5" ry="5" width="120" height="30" fill="#87a980" stroke="#999"/><g transform="translate(90,0)"><path d="M0 0.500h25a4.500 4.500 0 0 1 4.500 4.500v20a4.500 4.500 0 0 1-4.500 4.500h-25z" fill="#000" fill-opacity="0.05"/><path d="M0 1v28" stroke="#000" stroke-opacity="0.1"/><rect x="10" y="7.2" width="10" height="2.6" fill="#fff" opacity="0.9"/><rect x="10" y="11.4" width="10" height="2.6" fill="#fff" opacity="0.9"/><rect x="10" y="15.6" width="10" height="2.6" fill="#fff" opacity="0.9"/><rect x="10" y="19.8" width="10" height="2.6" fill="#fff" opacity="0.9"/></g><text x="82" y="20" text-anchor="end" font-size="14" fill="#333" font-style="italic">debug 80</text><rect x="-5" y="10" rx="3" ry="3" width="10" height="10" fill="#d9d9d9" stroke="#999"/></g>
<g transform="translate(0,585)"><rect rx="5" ry="5" width="180" height="30" fill="#ffffff" stroke="#999"/><g transform="translate(0,0)"><path d="M30 0.500h-25a4.500 4.500 0 0 0-4.500 4.500v20a4.500 4.500 0 0 0 4.500 4.500h25z" fill="#000" fill-opacity="0.05"/><path d="M30 1v28" stroke="#000" stroke-opacity="0.1"/><path d="M15 8c-4.4 0-8 2.7-8 6 0 1.9 1.1 3.500 2.900 4.600-.2 1.300-.9 2.500-1.900 3.400 2-.2 3.700-1 5-2.200.6.1 1.300.2 2 .2 4.400 0 8-2.700 8-6s-3.600-6-8-6z" fill="none" stroke="#ccc" stroke-width="1.6"/></g><text x="38" y="20" font-size="14" fill="#333" font-style="italic">Create Influx Tags</text></g>
<g transform="translate(0,625)"><g transform="translate(-25,2)"><rect rx="5" ry="5" width="32" height="26" fill="#eee" stroke="#999"/><rect x="5" y="4" rx="4" ry="4" width="16" height="18" fill="#a6bbcf"/></g><rect rx="5" ry="5" width="120" height="30" fill="#a6bbcf" stroke="#999"/><g transform="translate(0,0)"><path d="M30 0.500h-25a4.500 4.500 0 0 0-4.500 4.500v20a4.500 4.500 0 0 0 4.500 4.500h25z" fill="#000" fill-opacity="0.05"/><path d="M30 1v28" stroke="#000" stroke-opacity="0.1"/><path d="M12.800 4.300h3.800l5.200 10.700-5.200 10.700h-3.800l5.200-10.700z" fill="#fff"/><rect x="8.800" y="10" width="9" height="3.500" fill="#fff"/><rect x="8.800" y="16.500" width="9" height="3.500" fill="#fff"/></g><text x="38" y="20" font-size="14" fill="#333">timestamp</text><rect x="115" y="10" rx="3" ry="3" width="10" height="10" fill="#d9d9d9" stroke="#999"/></g>
<g transform="translate(0,665)"><rect rx="5" ry="5" width="140" height="30" fill="#fdd0a2" stroke="#999"/><g transform="translate(0,0)"><path d="M30 0.500h-25a4.500 4.500 0 0 0-4.500 4.500v20a4.500 4.500 0 0 0 4.500 4.500h25z" fill="#000" fill-opacity="0.05"/><path d="M30 1v28" stroke="#000" stroke-opacity="0.1"/><path d="M21 7.300c-.7-2.100-3.900-2.100-4.500 1.100l-2.900 13.600c-.6 3.100-3.300 3.300-4.500 1.500M10.800 12.800h8.400" fill="none" stroke="#fff" stroke-width="2.600" stroke-linecap="round"/></g><text x="38" y="20" font-size="14" fill="#333" font-style="italic">function 10</text><rect x="-5" y="10" rx="3" ry="3" width="10" height="10" fill="#d9d9d9" stroke="#999"/><rect x="135" y="10" rx="3" ry="3" width="10" height="10" fill="#d9d9d9" stroke="#999"/></g>
<g transform="translate(0,705)"><rect rx="5" ry="5" width="180" height="30" fill="#e6e0f8" stroke="#999"/><g transform="translate(0,0)"><path d="M30 0.500h-25a4.500 4.500 0 0 0-4.500 4.500v20a4.500 4.500 0 0 0 4.500 4.500h25z" fill="#000" fill-opacity="0.05"/><path d="M30 1v28" stroke="#000" stroke-opacity="0.1"/><path d="M21.300 17.800a6.800 6.800 0 1 1-1-7.200" fill="none" stroke="#fff" stroke-width="2.600" opacity="0.95"/><path d="M17.500 6l6 1.200-2.600 5.500z" fill="#fff"/><path d="M15 11.500v4l2.500 1.500" stroke="#fff" stroke-width="1.500" fill="none" opacity="0.9"/></g><text x="38" y="20" font-size="14" fill="#333">Enumeration Loop</text><rect x="-5" y="10" rx="3" ry="3" width="10" height="10" fill="#d9d9d9" stroke="#999"/><rect x="175" y="3.5" rx="3" ry="3" width="10" height="10" fill="#d9d9d9" stroke="#999"/><rect x="175" y="16.5" rx="3" ry="3" width="10" height="10" fill="#d9d9d9" stroke="#999"/></g>
<g transform="translate(220,705)"><g transform="translate(114,2)"><rect rx="5" ry="5" width="32" height="26" fill="#eee" fill-opacity="1" stroke="#999"/><rect x="11" y="4" rx="4" ry="4" width="16" height="18" fill="#87a980" fill-opacity="1"/></g><rect rx="5" ry="5" width="120" height="30" fill="#87a980" stroke="#999"/><g transform="translate(90,0)"><path d="M0 0.500h25a4.500 4.500 0 0 1 4.500 4.500v20a4.500 4.500 0 0 1-4.500 4.500h-25z" fill="#000" fill-opacity="0.05"/><path d="M0 1v28" stroke="#000" stroke-opacity="0.1"/><rect x="10" y="7.2" width="10" height="2.6" fill="#fff" opacity="0.9"/><rect x="10" y="11.4" width="10" height="2.6" fill="#fff" opacity="0.9"/><rect x="10" y="15.6" width="10" height="2.6" fill="#fff" opacity="0.9"/><rect x="10" y="19.8" width="10" height="2.6" fill="#fff" opacity="0.9"/></g><text x="82" y="20" text-anchor="end" font-size="14" fill="#333" font-style="italic">debug 64</text><rect x="-5" y="10" rx="3" ry="3" width="10" height="10" fill="#d9d9d9" stroke="#999"/></g>
<g transform="translate(0,745)"><rect rx="5" ry="5" width="140" height="30" fill="#e7e7ae" stroke="#999"/><g transform="translate(0,0)"><path d="M30 0.500h-25a4.500 4.500 0 0 0-4.500 4.500v20a4.500 4.500 0 0 0 4.500 4.500h25z" fill="#000" fill-opacity="0.05"/><path d="M30 1v28" stroke="#000" stroke-opacity="0.1"/><circle cx="15" cy="15" r="7.600" fill="#fff" fill-opacity="0.25" stroke="#fff" stroke-width="1" stroke-opacity="0.7"/><path d="M9.500 10.500c2-2.500 5-3.500 7.500-2.800l1.500 2.300-2 1.200-.5 2.300-2.500.5-1 2.500-2.500-1.500z" fill="#fff"/><path d="M16 14.500l3.500-1.500 2.800 1.500c.3 2.500-.8 5-3 6.500l-1.300-2.500-2.500-.8z" fill="#fff"/><path d="M11 17.500l2.500 1 .5 3.500c-1.500-.5-3-2-3.500-3.500z" fill="#fff"/></g><text x="38" y="20" font-size="14" fill="#333">http request</text><rect x="-5" y="10" rx="3" ry="3" width="10" height="10" fill="#d9d9d9" stroke="#999"/><rect x="135" y="10" rx="3" ry="3" width="10" height="10" fill="#d9d9d9" stroke="#999"/></g>
<g transform="translate(0,785)"><rect rx="5" ry="5" width="140" height="30" fill="#e7e7ae" stroke="#999"/><g transform="translate(0,0)"><path d="M30 0.500h-25a4.500 4.500 0 0 0-4.500 4.500v20a4.500 4.500 0 0 0 4.500 4.500h25z" fill="#000" fill-opacity="0.05"/><path d="M30 1v28" stroke="#000" stroke-opacity="0.1"/><circle cx="15" cy="15" r="7.600" fill="#fff" fill-opacity="0.25" stroke="#fff" stroke-width="1" stroke-opacity="0.7"/><path d="M9.500 10.500c2-2.500 5-3.500 7.500-2.800l1.500 2.300-2 1.200-.5 2.300-2.500.5-1 2.500-2.500-1.500z" fill="#fff"/><path d="M16 14.500l3.500-1.500 2.800 1.500c.3 2.500-.8 5-3 6.500l-1.300-2.500-2.500-.8z" fill="#fff"/><path d="M11 17.500l2.500 1 .5 3.500c-1.500-.5-3-2-3.500-3.500z" fill="#fff"/></g><text x="38" y="20" font-size="14" fill="#333">http request</text><rect x="-5" y="10" rx="3" ry="3" width="10" height="10" fill="#d9d9d9" stroke="#999"/><rect x="135" y="10" rx="3" ry="3" width="10" height="10" fill="#d9d9d9" stroke="#999"/></g>
<g transform="translate(0,825)"><rect rx="5" ry="5" width="140" height="30" fill="#e7e7ae" stroke="#999"/><g transform="translate(0,0)"><path d="M30 0.500h-25a4.500 4.500 0 0 0-4.500 4.500v20a4.500 4.500 0 0 0 4.500 4.500h25z" fill="#000" fill-opacity="0.05"/><path d="M30 1v28" stroke="#000" stroke-opacity="0.1"/><circle cx="15" cy="15" r="7.600" fill="#fff" fill-opacity="0.25" stroke="#fff" stroke-width="1" stroke-opacity="0.7"/><path d="M9.500 10.500c2-2.500 5-3.500 7.500-2.800l1.500 2.300-2 1.200-.5 2.300-2.500.5-1 2.500-2.500-1.500z" fill="#fff"/><path d="M16 14.500l3.500-1.500 2.800 1.500c.3 2.500-.8 5-3 6.500l-1.300-2.500-2.500-.8z" fill="#fff"/><path d="M11 17.500l2.500 1 .5 3.500c-1.500-.5-3-2-3.500-3.500z" fill="#fff"/></g><text x="38" y="20" font-size="14" fill="#333">http request</text><rect x="-5" y="10" rx="3" ry="3" width="10" height="10" fill="#d9d9d9" stroke="#999"/><rect x="135" y="10" rx="3" ry="3" width="10" height="10" fill="#d9d9d9" stroke="#999"/></g>
<g transform="translate(0,865)"><rect rx="5" ry="5" width="140" height="30" fill="#e7e7ae" stroke="#999"/><g transform="translate(0,0)"><path d="M30 0.500h-25a4.500 4.500 0 0 0-4.500 4.500v20a4.500 4.500 0 0 0 4.500 4.500h25z" fill="#000" fill-opacity="0.05"/><path d="M30 1v28" stroke="#000" stroke-opacity="0.1"/><circle cx="15" cy="15" r="7.600" fill="#fff" fill-opacity="0.25" stroke="#fff" stroke-width="1" stroke-opacity="0.7"/><path d="M9.500 10.500c2-2.500 5-3.500 7.500-2.800l1.500 2.300-2 1.200-.5 2.300-2.500.5-1 2.500-2.500-1.500z" fill="#fff"/><path d="M16 14.500l3.500-1.500 2.800 1.500c.3 2.500-.8 5-3 6.500l-1.300-2.500-2.500-.8z" fill="#fff"/><path d="M11 17.500l2.500 1 .5 3.500c-1.500-.5-3-2-3.500-3.500z" fill="#fff"/></g><text x="38" y="20" font-size="14" fill="#333">http request</text><rect x="-5" y="10" rx="3" ry="3" width="10" height="10" fill="#d9d9d9" stroke="#999"/><rect x="135" y="10" rx="3" ry="3" width="10" height="10" fill="#d9d9d9" stroke="#999"/></g>
<g transform="translate(0,905)"><rect rx="5" ry="5" width="140" height="30" fill="#e7e7ae" stroke="#999"/><g transform="translate(0,0)"><path d="M30 0.500h-25a4.500 4.500 0 0 0-4.500 4.500v20a4.500 4.500 0 0 0 4.500 4.500h25z" fill="#000" fill-opacity="0.05"/><path d="M30 1v28" stroke="#000" stroke-opacity="0.1"/><circle cx="15" cy="15" r="7.600" fill="#fff" fill-opacity="0.25" stroke="#fff" stroke-width="1" stroke-opacity="0.7"/><path d="M9.500 10.500c2-2.500 5-3.500 7.500-2.800l1.500 2.300-2 1.200-.5 2.300-2.500.5-1 2.500-2.500-1.500z" fill="#fff"/><path d="M16 14.500l3.500-1.500 2.800 1.500c.3 2.500-.8 5-3 6.500l-1.300-2.500-2.500-.8z" fill="#fff"/><path d="M11 17.500l2.500 1 .5 3.500c-1.500-.5-3-2-3.500-3.500z" fill="#fff"/></g><text x="38" y="20" font-size="14" fill="#333">http request</text><rect x="-5" y="10" rx="3" ry="3" width="10" height="10" fill="#d9d9d9" stroke="#999"/><rect x="135" y="10" rx="3" ry="3" width="10" height="10" fill="#d9d9d9" stroke="#999"/></g>
<g transform="translate(800,785)"><g transform="translate(-25,2)"><rect rx="5" ry="5" width="32" height="26" fill="#eee" stroke="#999"/><rect x="5" y="4" rx="4" ry="4" width="16" height="18" fill="#a6bbcf"/></g><rect rx="5" ry="5" width="120" height="30" fill="#a6bbcf" stroke="#999"/><g transform="translate(0,0)"><path d="M30 0.500h-25a4.500 4.500 0 0 0-4.500 4.500v20a4.500 4.500 0 0 0 4.500 4.500h25z" fill="#000" fill-opacity="0.05"/><path d="M30 1v28" stroke="#000" stroke-opacity="0.1"/><path d="M12.800 4.300h3.800l5.200 10.700-5.200 10.700h-3.800l5.200-10.700z" fill="#fff"/><rect x="8.800" y="10" width="9" height="3.500" fill="#fff"/><rect x="8.800" y="16.500" width="9" height="3.500" fill="#fff"/></g><text x="38" y="20" font-size="14" fill="#333">timestamp</text><rect x="115" y="10" rx="3" ry="3" width="10" height="10" fill="#d9d9d9" stroke="#999"/></g>
</g></svg>
</div>
<div id="vscroll"><div class="th"></div></div>
<div id="hscroll"><div class="th"></div></div>
<div id="sep"><div class="abs" style="left:1.500px;top:298px;width:0.500px;height:23px;background:#c4c4c4"></div><div class="abs" style="left:2.600px;top:298px;width:0.500px;height:23px;background:#c4c4c4"></div></div>

<!-- sidebar -->
<div id="side">
<div id="stabs">
<div id="stab"><svg class="abs" style="left:6.200px;top:4.500px" width="6" height="7" viewBox="0 0 6 7"><ellipse cx="3" cy="4" rx="1.600" ry="2.300" fill="#666"/><circle cx="3" cy="1.400" r="1" fill="#666"/><path d="M0.300 2.500l1.300 1M5.700 2.500l-1.300 1M0.200 4.300h1.300M5.800 4.300h-1.300M0.400 6.500l1.300-1M5.600 6.500l-1.300-1" stroke="#666" stroke-width="0.500"/></svg><div class="t">debug</div></div>
<div class="sbtn" style="left:66.300px"><div class="abs" style="left:5.200px;top:2.200px;font-size:7px;line-height:8px;font-weight:bold;color:#666">i</div></div>
<div class="sbtn" style="left:82.100px"><svg class="abs" style="left:3px;top:3.200px" width="7" height="6" viewBox="0 0 7 6"><path d="M1.500 0.500h5l-1 4h-5zM0.800 5.300h4.500" fill="#777" stroke="#777" stroke-width="0.500"/></svg></div>
<div class="sbtn" style="left:97.900px;background:#e4e4e4"><svg class="abs" style="left:3.300px;top:2.600px" width="6" height="7" viewBox="0 0 6 7"><ellipse cx="3" cy="4" rx="1.600" ry="2.300" fill="#666"/><circle cx="3" cy="1.400" r="1" fill="#666"/><path d="M0.300 2.500l1.300 1M5.700 2.500l-1.300 1M0.200 4.300h1.300M5.800 4.300h-1.300M0.400 6.500l1.300-1M5.600 6.500l-1.300-1" stroke="#666" stroke-width="0.500"/></svg></div>
<div class="sbtn" style="left:113.600px"><svg class="abs" style="left:3px;top:2.900px" width="7" height="7" viewBox="0 0 7 7"><circle cx="3.500" cy="3.500" r="1.900" fill="none" stroke="#777" stroke-width="1.300"/><path d="M3.500 0v7M0 3.500h7M1 1l5 5M6 1l-5 5" stroke="#777" stroke-width="0.800"/><circle cx="3.500" cy="3.500" r="0.900" fill="#fff"/></svg></div>
<svg class="abs" style="left:133px;top:7.500px" width="5" height="4" viewBox="0 0 5 4"><path d="M0.500 0.800h3.600l-1.800 2.200z" fill="#666"/></svg>
</div>
<div id="sfilter">
<div class="fbtn" style="left:57.200px;width:44.200px"><svg class="abs" style="left:2.800px;top:2.200px" width="6" height="6" viewBox="0 0 6 6"><path d="M0.300 0.500h5.400l-2.100 2.500v2.500l-1.200-.8v-1.700z" fill="#666"/></svg><span class="abs" style="left:9.200px;top:1.500px">all nodes</span><svg class="abs" style="left:37.500px;top:4px" width="4" height="3" viewBox="0 0 4 3"><path d="M0.300 0.400h3.400l-1.700 2.200z" fill="#666"/></svg></div>
<div class="fbtn" style="left:106.500px;width:26.500px"><svg class="abs" style="left:3.200px;top:2.100px" width="5" height="6" viewBox="0 0 5 6"><path d="M0.200 1h4.600M1.800 0.400h1.400" stroke="#777" stroke-width="0.700"/><path d="M0.700 1.600h3.600l-.3 4h-3z" fill="#777"/></svg><span class="abs" style="left:9.200px;top:1.500px">all</span><svg class="abs" style="left:19.600px;top:4px" width="4" height="3" viewBox="0 0 4 3"><path d="M0.300 0.400h3.400l-1.700 2.200z" fill="#666"/></svg></div>
</div>
<div id="msgs">
<div class="abs" style="left:0;top:-54.300px;width:144px;height:640px">
<div class="sep" style="top:20.4px"></div>
<div class="meta" style="top:23px"><span class="tm">08/08/2024, 15:36:12</span><span class="nn">node: debug 40</span></div>
<div class="topic" style="top:32px">msg : Object</div>
<div class="pl" style="top:44px;padding-left:6.5px;"><svg class="car" width="3" height="4" viewBox="0 0 3 4"><path d="M0.400 0.400l2.200 1.600-2.200 1.600z" fill="#555"/></svg>{ <span class="k">payload</span>: <span class="t">object</span>, <span class="k">topic</span>: <span class="s">""</span>,</div>
<div class="pl" style="top:52px;"><span class="k">events</span>: <span class="t">array[3]</span>, <span class="k">tagData</span>:</div>
<div class="pl" style="top:59px;"><span class="t">array[3]</span>, <span class="k">filledVolumes</span>: <span class="t">object</span> &hellip; }</div>
<div class="sep" style="top:69px"></div>
<div class="meta" style="top:72px"><span class="tm">08/08/2024, 15:36:12</span><span class="nn">node: debug 40</span></div>
<div class="topic" style="top:81px">msg : Object</div>
<div class="pl" style="top:93px;padding-left:6.5px;"><svg class="car" width="3" height="4" viewBox="0 0 3 4"><path d="M0.400 0.400l2.200 1.600-2.200 1.600z" fill="#555"/></svg>{ <span class="k">payload</span>: <span class="t">object</span>, <span class="k">topic</span>: <span class="s">""</span>,</div>
<div class="pl" style="top:100px;"><span class="k">events</span>: <span class="t">array[4]</span>, <span class="k">tagData</span>:</div>
<div class="pl" style="top:108px;"><span class="t">array[4]</span>, <span class="k">filledVolumes</span>: <span class="t">object</span> &hellip; }</div>
<div class="sep" style="top:117.6px"></div>
<div class="meta" style="top:121px"><span class="tm">08/08/2024, 15:36:12</span><span class="nn">node: debug 40</span></div>
<div class="topic" style="top:130px">msg : Object</div>
<div class="pl" style="top:141px;padding-left:6.5px;"><svg class="car" width="3" height="4" viewBox="0 0 3 4"><path d="M0.400 0.400l2.200 1.600-2.200 1.600z" fill="#555"/></svg>{ <span class="k">payload</span>: <span class="t">object</span>, <span class="k">topic</span>: <span class="s">""</span>,</div>
<div class="pl" style="top:149px;"><span class="k">events</span>: <span class="t">array[5]</span>, <span class="k">tagData</span>:</div>
<div class="pl" style="top:157px;"><span class="t">array[5]</span>, <span class="k">filledVolumes</span>: <span class="t">object</span> &hellip; }</div>
<div class="sep" style="top:166.2px"></div>
<div class="meta" style="top:169px"><span class="tm">08/08/2024, 15:36:12</span><span class="nn">node: debug 40</span></div>
<div class="topic" style="top:178px">msg : Object</div>
<div class="pl" style="top:190px;padding-left:6.5px;"><svg class="car" width="3" height="4" viewBox="0 0 3 4"><path d="M0.400 0.400l2.200 1.600-2.200 1.600z" fill="#555"/></svg>{ <span class="k">payload</span>: <span class="t">object</span>, <span class="k">topic</span>: <span class="s">""</span>,</div>
<div class="pl" style="top:197px;"><span class="k">events</span>: <span class="t">array[6]</span>, <span class="k">tagData</span>:</div>
<div class="pl" style="top:205px;"><span class="t">array[6]</span>, <span class="k">filledVolumes</span>: <span class="t">object</span> &hellip; }</div>
<div class="sep" style="top:214.8px"></div>
<div class="meta" style="top:218px"><span class="tm">08/08/2024, 15:36:12</span><span class="nn">node: debug 40</span></div>
<div class="topic" style="top:227px">msg : Object</div>
<div class="pl" style="top:238px;padding-left:6.5px;"><svg class="car" width="3" height="4" viewBox="0 0 3 4"><path d="M0.400 0.400l2.200 1.600-2.200 1.600z" fill="#555"/></svg>{ <span class="k">payload</span>: <span class="t">object</span>, <span class="k">topic</span>: <span class="s">""</span>,</div>
<div class="pl" style="top:246px;"><span class="k">events</span>: <span class="t">array[7]</span>, <span class="k">tagData</span>:</div>
<div class="pl" style="top:254px;"><span class="t">array[7]</span>, <span class="k">filledVolumes</span>: <span class="t">object</span> &hellip; }</div>
<div class="sep" style="top:263.4px"></div>
<div class="meta" style="top:266px"><span class="tm">08/08/2024, 15:36:12</span><span class="nn">node: debug 40</span></div>
<div class="topic" style="top:275px">msg : Object</div>
<div class="pl" style="top:287px;padding-left:6.5px;"><svg class="car" width="3" height="4" viewBox="0 0 3 4"><path d="M0.400 0.400l2.200 1.600-2.200 1.600z" fill="#555"/></svg>{ <span class="k">payload</span>: <span class="t">object</span>, <span class="k">topic</span>: <span class="s">""</span>,</div>
<div class="pl" style="top:295px;"><span class="k">events</span>: <span class="t">array[8]</span>, <span class="k">tagData</span>:</div>
<div class="pl" style="top:302px;"><span class="t">array[8]</span>, <span class="k">filledVolumes</span>: <span class="t">object</span> &hellip; }</div>
<div class="sep" style="top:312px"></div>
<div class="meta" style="top:315px"><span class="tm">08/08/2024, 15:36:13</span><span class="nn">node: debug 40</span></div>
<div class="topic" style="top:324px">msg : Object</div>
<div class="pl" style="top:335px;padding-left:6.5px;"><svg class="car" width="3" height="4" viewBox="0 0 3 4"><path d="M0.400 0.400l2.200 1.600-2.200 1.600z" fill="#555"/></svg>{ <span class="k">payload</span>: <span class="t">object</span>, <span class="k">topic</span>: <span class="s">""</span>,</div>
<div class="pl" style="top:343px;"><span class="k">events</span>: <span class="t">array[9]</span>, <span class="k">tagData</span>:</div>
<div class="pl" style="top:351px;"><span class="t">array[9]</span>, <span class="k">filledVolumes</span>: <span class="t">object</span> &hellip; }</div>
<div class="sep" style="top:360.6px"></div>
<div class="meta" style="top:364px"><span class="tm">08/08/2024, 15:36:13</span><span class="nn">node: debug 40</span></div>
<div class="topic" style="top:373px">msg : Object</div>
<div class="pl" style="top:384px;padding-left:6.5px;"><svg class="car" width="3" height="4" viewBox="0 0 3 4"><path d="M0.400 0.400l2.200 1.600-2.200 1.600z" fill="#555"/></svg>{ <span class="k">payload</span>: <span class="t">object</span>, <span class="k">topic</span>: <span class="s">""</span>,</div>
<div class="pl" style="top:392px;"><span class="k">events</span>: <span class="t">array[10]</span>, <span class="k">tagData</span>:</div>
<div class="pl" style="top:399px;"><span class="t">array[10]</span>, <span class="k">filledVolumes</span>: <span class="t">object</span> &hellip;</div>
<div class="pl" style="top:407px;">}</div>
<div class="sep" style="top:417.1px"></div>
<div class="meta" style="top:420px"><span class="tm">08/08/2024, 15:36:13</span><span class="nn">node: debug 40</span></div>
<div class="topic" style="top:429px">msg : Object</div>
<div class="pl" style="top:441px;padding-left:6.5px;"><svg class="car" width="3" height="4" viewBox="0 0 3 4"><path d="M0.400 0.400l2.200 1.600-2.200 1.600z" fill="#555"/></svg>{ <span class="k">payload</span>: <span class="t">object</span>, <span class="k">topic</span>: <span class="s">""</span>,</div>
<div class="pl" style="top:448px;"><span class="k">events</span>: <span class="t">array[11]</span>, <span class="k">tagData</span>:</div>
<div class="pl" style="top:456px;"><span class="t">array[11]</span>, <span class="k">filledVolumes</span>: <span class="t">object</span> &hellip;</div>
<div class="pl" style="top:464px;">}</div>
<div class="sep" style="top:473.6px"></div>
<div class="meta" style="top:477px"><span class="tm">08/08/2024, 15:36:13</span><span class="nn">node: debug 40</span></div>
<div class="topic" style="top:486px">msg : Object</div>
<div class="pl" style="top:497px;padding-left:6.5px;"><svg class="car" width="3" height="4" viewBox="0 0 3 4"><path d="M0.400 0.400l2.200 1.600-2.200 1.600z" fill="#555"/></svg>{ <span class="k">payload</span>: <span class="t">object</span>, <span class="k">topic</span>: <span class="s">""</span>,</div>
<div class="pl" style="top:505px;"><span class="k">events</span>: <span class="t">array[12]</span>, <span class="k">tagData</span>:</div>
<div class="pl" style="top:513px;"><span class="t">array[12]</span>, <span class="k">filledVolumes</span>: <span class="t">object</span> &hellip;</div>
<div class="pl" style="top:520px;">}</div>
<div class="sep" style="top:530.1px"></div>
<div class="meta" style="top:533px"><span class="tm">08/08/2024, 15:36:13</span><span class="nn">node: Event Status</span></div>
<div class="topic" style="top:542px">msg.events : array[12]</div>
<div class="pl" style="top:554px;padding-left:6.5px;"><svg class="car" width="3" height="4" viewBox="0 0 3 4"><path d="M0.400 0.400l2.200 1.600-2.200 1.600z" fill="#555"/></svg>[ <span class="t">object</span>, <span class="t">object</span>, <span class="t">object</span>, <span class="t">object</span>,</div>
<div class="pl" style="top:561px;"><span class="t">object</span>, <span class="t">object</span>, <span class="t">object</span>, <span class="t">object</span>,</div>
<div class="pl" style="top:569px;"><span class="t">object</span>, <span class="t">object</span> &hellip; ]</div>
<div class="sep" style="top:578.7px"></div>
<div class="meta" style="top:582px"><span class="tm">08/08/2024, 15:36:13</span><span class="nn">node: Timeseries Status</span></div>
<div class="topic" style="top:591px">msg.tagData : array[12]</div>
<div class="pl" style="top:602px;padding-left:6.5px;"><svg class="car" width="3" height="4" viewBox="0 0 3 4"><path d="M0.400 0.400l2.200 1.600-2.200 1.600z" fill="#555"/></svg>[ <span class="t">object</span>, <span class="t">object</span>, <span class="t">object</span>, <span class="t">object</span>,</div>
<div class="pl" style="top:610px;"><span class="t">object</span>, <span class="t">object</span>, <span class="t">object</span>, <span class="t">object</span>,</div>
<div class="pl" style="top:618px;"><span class="t">object</span>, <span class="t">object</span> &hellip; ]</div>
<div class="sep" style="top:627.3px;height:3px;background:#eee"></div>
</div>
<div class="rb"></div><div class="sb"><div class="th"></div></div>
</div>
</div>
<div class="abs" style="left:0;top:627.700px;width:634px;height:1.300px;background:#bdbdbd"></div>
</div></body></html>
